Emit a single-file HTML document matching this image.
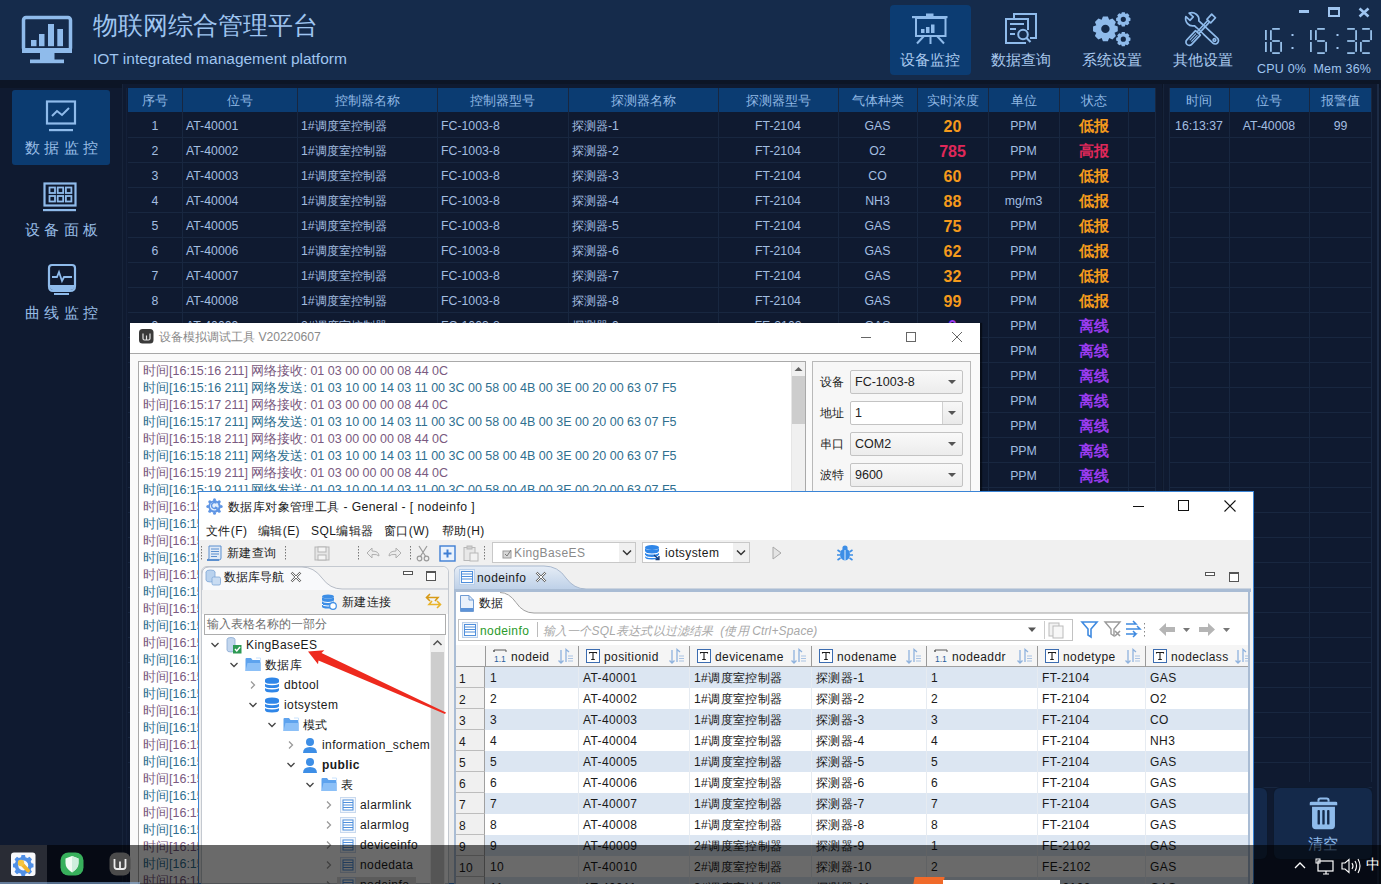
<!DOCTYPE html><html><head><meta charset="utf-8"><style>
*{box-sizing:border-box;margin:0;padding:0}
html,body{width:1381px;height:884px;overflow:hidden;background:#0e182b;font-family:"Liberation Sans",sans-serif}
.abs{position:absolute}
.t{position:absolute;white-space:nowrap}
.d{letter-spacing:0.4px}
</style></head><body>

<div class="abs" style="left:0;top:0;width:1381px;height:80px;background:#152b4b"></div>
<svg class="abs" style="left:0;top:0" width="90" height="80" viewBox="0 0 90 80">
<rect x="23.5" y="17.5" width="47" height="33" rx="2.5" fill="none" stroke="#8fbbeb" stroke-width="3.5"/>
<rect x="22" y="48" width="50" height="5" fill="#8fbbeb"/>
<rect x="40" y="52" width="14.5" height="8" fill="#8fbbeb"/>
<rect x="30" y="59.5" width="34" height="3.7" fill="#8fbbeb"/>
<rect x="31" y="40" width="5.5" height="6.2" fill="#8fbbeb"/>
<rect x="39" y="34" width="5.5" height="12.2" fill="#8fbbeb"/>
<rect x="48" y="24" width="6" height="22.2" fill="#8fbbeb"/>
<rect x="57.3" y="29" width="5.7" height="17.2" fill="#8fbbeb"/>
</svg>
<div class="t" style="left:93px;top:10px;font-size:25px;color:#9fc5f0;line-height:30px">物联网综合管理平台</div>
<div class="t" style="left:93px;top:49.5px;font-size:15.5px;color:#9fc5f0;line-height:18px">IOT integrated management platform</div>
<div class="abs" style="left:890px;top:5px;width:81px;height:70px;background:#0c3c72;border-radius:4px"></div>
<div class="t" style="left:900px;top:50px;font-size:15px;color:#a9c9ee;line-height:20px">设备监控</div>
<div class="t" style="left:991px;top:50px;font-size:15px;color:#a9c9ee;line-height:20px">数据查询</div>
<div class="t" style="left:1082px;top:50px;font-size:15px;color:#a9c9ee;line-height:20px">系统设置</div>
<div class="t" style="left:1173px;top:50px;font-size:15px;color:#a9c9ee;line-height:20px">其他设置</div>
<svg class="abs" style="left:905px;top:8px" width="50" height="40" viewBox="905 8 50 40">
<rect x="926" y="13.5" width="7.5" height="3" fill="#8fbbeb"/>
<rect x="912" y="16" width="35.5" height="2.2" fill="#8fbbeb"/>
<rect x="916" y="18" width="29.5" height="18" fill="none" stroke="#8fbbeb" stroke-width="2"/>
<rect x="921" y="29" width="3.5" height="4" fill="#8fbbeb"/>
<rect x="926" y="27" width="3.5" height="6" fill="#8fbbeb"/>
<rect x="931" y="24.5" width="3.5" height="8.5" fill="#8fbbeb"/>
<line x1="930.5" y1="36" x2="930.5" y2="44" stroke="#8fbbeb" stroke-width="2"/>
<line x1="924" y1="36" x2="917" y2="43.5" stroke="#8fbbeb" stroke-width="2"/>
<line x1="937" y1="36" x2="944" y2="43.5" stroke="#8fbbeb" stroke-width="2"/>
</svg>
<svg class="abs" style="left:1000px;top:8px" width="45" height="40" viewBox="1000 8 45 40">
<path d="M1014 18 V14 H1036 V38 H1030" fill="none" stroke="#8fbbeb" stroke-width="2"/>
<path d="M1026 43 H1006 V19 H1028 V30" fill="none" stroke="#8fbbeb" stroke-width="2"/>
<line x1="1010" y1="24" x2="1024" y2="24" stroke="#8fbbeb" stroke-width="2"/>
<line x1="1010" y1="29" x2="1016" y2="29" stroke="#8fbbeb" stroke-width="2"/>
<line x1="1010" y1="34" x2="1015" y2="34" stroke="#8fbbeb" stroke-width="2"/>
<circle cx="1023" cy="34.5" r="4.8" fill="none" stroke="#8fbbeb" stroke-width="2"/>
<line x1="1026.5" y1="38" x2="1030.5" y2="42" stroke="#8fbbeb" stroke-width="2.2"/>
</svg>
<svg class="abs" style="left:1085px;top:8px" width="50" height="42" viewBox="1085 8 50 42">
<path fill-rule="evenodd" fill="#8fbbeb" d="M1114.48 25.14 L1117.76 26.44 L1117.76 31.36 L1114.48 32.66 L1114.48 32.66 L1115.88 35.90 L1112.40 39.38 L1109.16 37.98 L1109.16 37.98 L1107.86 41.26 L1102.94 41.26 L1101.64 37.98 L1101.64 37.98 L1098.40 39.38 L1094.92 35.90 L1096.32 32.66 L1096.32 32.66 L1093.04 31.36 L1093.04 26.44 L1096.32 25.14 L1096.32 25.14 L1094.92 21.90 L1098.40 18.42 L1101.64 19.82 L1101.64 19.82 L1102.94 16.54 L1107.86 16.54 L1109.16 19.82 L1109.16 19.82 L1112.40 18.42 L1115.88 21.90 L1114.48 25.14 Z M1109.60 28.90 A4.2 4.2 0 1 0 1101.20 28.90 A4.2 4.2 0 1 0 1109.60 28.90 Z"/>
<path fill-rule="evenodd" fill="#8fbbeb" d="M1128.56 17.12 L1130.46 17.88 L1130.46 20.72 L1128.56 21.48 L1128.56 21.48 L1129.37 23.36 L1127.36 25.37 L1125.48 24.56 L1125.48 24.56 L1124.72 26.46 L1121.88 26.46 L1121.12 24.56 L1121.12 24.56 L1119.24 25.37 L1117.23 23.36 L1118.04 21.48 L1118.04 21.48 L1116.14 20.72 L1116.14 17.88 L1118.04 17.12 L1118.04 17.12 L1117.23 15.24 L1119.24 13.23 L1121.12 14.04 L1121.12 14.04 L1121.88 12.14 L1124.72 12.14 L1125.48 14.04 L1125.48 14.04 L1127.36 13.23 L1129.37 15.24 L1128.56 17.12 Z M1125.90 19.30 A2.6 2.6 0 1 0 1120.70 19.30 A2.6 2.6 0 1 0 1125.90 19.30 Z"/>
<path fill-rule="evenodd" fill="#8fbbeb" d="M1128.56 37.02 L1130.46 37.78 L1130.46 40.62 L1128.56 41.38 L1128.56 41.38 L1129.37 43.26 L1127.36 45.27 L1125.48 44.46 L1125.48 44.46 L1124.72 46.36 L1121.88 46.36 L1121.12 44.46 L1121.12 44.46 L1119.24 45.27 L1117.23 43.26 L1118.04 41.38 L1118.04 41.38 L1116.14 40.62 L1116.14 37.78 L1118.04 37.02 L1118.04 37.02 L1117.23 35.14 L1119.24 33.13 L1121.12 33.94 L1121.12 33.94 L1121.88 32.04 L1124.72 32.04 L1125.48 33.94 L1125.48 33.94 L1127.36 33.13 L1129.37 35.14 L1128.56 37.02 Z M1125.90 39.20 A2.6 2.6 0 1 0 1120.70 39.20 A2.6 2.6 0 1 0 1125.90 39.20 Z"/>
</svg>
<svg class="abs" style="left:1180px;top:8px" width="45" height="42" viewBox="1180 8 45 42">
<g transform="translate(1192.5,19.5) rotate(43)" fill="none" stroke="#8fbbeb" stroke-width="1.7" stroke-linejoin="round">
<path d="M-6.8 -2.4 L-1.2 -2.4 L-1.2 2.4 L-6.8 2.4 A7.2 7.2 0 0 0 5.6 3.3 L31 3.3 A3.3 3.3 0 0 0 31 -3.3 L5.6 -3.3 A7.2 7.2 0 0 0 -6.8 -2.4 Z"/>
<circle cx="30" cy="0" r="1.3"/>
</g>
<g transform="translate(1187,44.5) rotate(-47)">
<path d="M0 -4.6 L18 -4.6 L18 4.6 L0 4.6 Z" fill="#152b4b"/>
<g fill="none" stroke="#8fbbeb" stroke-width="1.7" stroke-linejoin="round">
<path d="M3.3 -3.3 L16 -3.3 L16 3.3 L3.3 3.3 A3.3 3.3 0 0 1 3.3 -3.3 Z"/>
<path d="M5 -0.9 L14 -0.9 M5 1.3 L14 1.3" stroke-width="1.1"/>
<path d="M16 -1.2 L32 -1.2 M16 1.2 L32 1.2"/>
<path d="M32 -2.6 L39 -2.6 L39 2.6 L32 2.6 Z"/>
</g>
</g>
</svg>
<div class="abs" style="left:1299px;top:10px;width:10px;height:2.5px;background:#9fc5f0"></div>
<div class="abs" style="left:1328px;top:7px;width:12px;height:10px;border:2px solid #9fc5f0;border-top-width:3px"></div>
<svg class="abs" style="left:1358px;top:7px" width="12" height="11" viewBox="0 0 12 11"><path d="M1.5 1.5 L10.5 9.5 M10.5 1.5 L1.5 9.5" stroke="#9fc5f0" stroke-width="2.6"/></svg>
<svg class="abs" style="left:0;top:0" width="1381" height="80" viewBox="0 0 1381 80"><rect x="1265" y="30" width="1.8" height="10.0" fill="#96bfe8"/><rect x="1265" y="42.0" width="1.8" height="10.0" fill="#96bfe8"/><rect x="1272.20" y="28.00" width="7.60" height="1.80" fill="#96bfe8"/><rect x="1270.00" y="30.20" width="1.80" height="9.90" fill="#96bfe8"/><rect x="1272.20" y="40.10" width="7.60" height="1.80" fill="#96bfe8"/><rect x="1270.00" y="41.90" width="1.80" height="9.90" fill="#96bfe8"/><rect x="1272.20" y="52.20" width="7.60" height="1.80" fill="#96bfe8"/><rect x="1280.20" y="41.90" width="1.80" height="9.90" fill="#96bfe8"/><rect x="1291.5" y="34" width="2" height="2" fill="#9fc5f0"/><rect x="1291.5" y="47" width="2" height="2" fill="#9fc5f0"/><rect x="1310" y="30" width="1.8" height="10.0" fill="#96bfe8"/><rect x="1310" y="42.0" width="1.8" height="10.0" fill="#96bfe8"/><rect x="1317.20" y="28.00" width="7.60" height="1.80" fill="#96bfe8"/><rect x="1315.00" y="30.20" width="1.80" height="9.90" fill="#96bfe8"/><rect x="1317.20" y="40.10" width="7.60" height="1.80" fill="#96bfe8"/><rect x="1325.20" y="41.90" width="1.80" height="9.90" fill="#96bfe8"/><rect x="1317.20" y="52.20" width="7.60" height="1.80" fill="#96bfe8"/><rect x="1336.5" y="34" width="2" height="2" fill="#9fc5f0"/><rect x="1336.5" y="47" width="2" height="2" fill="#9fc5f0"/><rect x="1347.20" y="28.00" width="7.60" height="1.80" fill="#96bfe8"/><rect x="1355.20" y="30.20" width="1.80" height="9.90" fill="#96bfe8"/><rect x="1347.20" y="40.10" width="7.60" height="1.80" fill="#96bfe8"/><rect x="1355.20" y="41.90" width="1.80" height="9.90" fill="#96bfe8"/><rect x="1347.20" y="52.20" width="7.60" height="1.80" fill="#96bfe8"/><rect x="1362.20" y="28.00" width="7.60" height="1.80" fill="#96bfe8"/><rect x="1370.20" y="30.20" width="1.80" height="9.90" fill="#96bfe8"/><rect x="1362.20" y="40.10" width="7.60" height="1.80" fill="#96bfe8"/><rect x="1360.00" y="41.90" width="1.80" height="9.90" fill="#96bfe8"/><rect x="1362.20" y="52.20" width="7.60" height="1.80" fill="#96bfe8"/></svg>
<div class="t" style="left:1257px;top:62px;font-size:12.5px;color:#9fc5f0;line-height:15px;letter-spacing:0.2px">CPU 0%&nbsp;&nbsp;Mem 36%</div>
<div class="abs" style="left:0;top:80px;width:1381px;height:8px;background:#0c1526"></div>
<div class="abs" style="left:0;top:88px;width:122px;height:796px;background:#0f1a30"></div>
<div class="abs" style="left:12px;top:90px;width:98px;height:75px;background:#0b3b70;border-radius:3px"></div>
<svg class="abs" style="left:0;top:80px" width="120" height="240" viewBox="0 80 120 240">
<rect x="47" y="101.5" width="28" height="22" fill="none" stroke="#8fbbeb" stroke-width="2.2"/>
<rect x="49" y="129" width="24" height="2.2" fill="#8fbbeb"/>
<path d="M52 116 L57 111 L62 115 L69 108" fill="none" stroke="#8fbbeb" stroke-width="2"/>
<rect x="44.5" y="183.5" width="31" height="22" fill="none" stroke="#8fbbeb" stroke-width="2.2"/>
<rect x="43" y="209" width="33" height="2.2" fill="#8fbbeb"/>

<rect x="49.5" y="187.5" width="5.5" height="5.5" fill="none" stroke="#8fbbeb" stroke-width="1.8"/>
<rect x="49.5" y="196.0" width="5.5" height="5.5" fill="none" stroke="#8fbbeb" stroke-width="1.8"/>
<rect x="57.7" y="187.5" width="5.5" height="5.5" fill="none" stroke="#8fbbeb" stroke-width="1.8"/>
<rect x="57.7" y="196.0" width="5.5" height="5.5" fill="none" stroke="#8fbbeb" stroke-width="1.8"/>
<rect x="65.9" y="187.5" width="5.5" height="5.5" fill="none" stroke="#8fbbeb" stroke-width="1.8"/>
<rect x="65.9" y="196.0" width="5.5" height="5.5" fill="none" stroke="#8fbbeb" stroke-width="1.8"/>
<path d="M49 268 Q49 265 52 265 H72 Q75 265 75 268 V286 Q75 291 70 291 H53 Q49 291 49 286 Z" fill="none" stroke="#8fbbeb" stroke-width="2.2"/>
<path d="M50 285 H74 V287 Q74 290 70 290 H53 Q50 290 50 287 Z" fill="#8fbbeb"/>
<rect x="54" y="293" width="15" height="2" fill="#8fbbeb"/>
<path d="M52 277 H57 L59 272 L62 281 L64 277 H72" fill="none" stroke="#8fbbeb" stroke-width="1.8"/>
</svg>
<div class="t" style="left:25px;top:137.5px;font-size:15px;letter-spacing:4.3px;color:#98bde6;line-height:20px">数据监控</div>
<div class="t" style="left:25px;top:219.5px;font-size:15px;letter-spacing:4.3px;color:#98bde6;line-height:20px">设备面板</div>
<div class="t" style="left:25px;top:302.5px;font-size:15px;letter-spacing:4.3px;color:#98bde6;line-height:20px">曲线监控</div>
<div class="abs" style="left:122px;top:84px;width:1040px;height:800px;background:#0f1a30;border-left:1px solid #17243b"></div><div class="abs" style="left:126px;top:88px;width:1px;height:796px;background:#142039"></div>
<div class="abs" style="left:1163px;top:84px;width:216px;height:800px;background:#0f1a30;border-left:1px solid #16233a;border-right:2px solid #1c2b45"></div>
<div class="abs" style="left:128px;top:88px;width:1027px;height:24px;background:#0b3c72"></div>
<div class="t" style="left:128px;top:89px;width:54px;height:24px;line-height:24px;text-align:center;font-size:12.5px;color:#90b8e4">序号</div>
<div class="t" style="left:182px;top:89px;width:115px;height:24px;line-height:24px;text-align:center;font-size:12.5px;color:#90b8e4">位号</div>
<div class="t" style="left:297px;top:89px;width:140px;height:24px;line-height:24px;text-align:center;font-size:12.5px;color:#90b8e4">控制器名称</div>
<div class="t" style="left:437px;top:89px;width:131px;height:24px;line-height:24px;text-align:center;font-size:12.5px;color:#90b8e4">控制器型号</div>
<div class="t" style="left:568px;top:89px;width:150px;height:24px;line-height:24px;text-align:center;font-size:12.5px;color:#90b8e4">探测器名称</div>
<div class="t" style="left:718px;top:89px;width:120px;height:24px;line-height:24px;text-align:center;font-size:12.5px;color:#90b8e4">探测器型号</div>
<div class="t" style="left:838px;top:89px;width:79px;height:24px;line-height:24px;text-align:center;font-size:12.5px;color:#90b8e4">气体种类</div>
<div class="t" style="left:917px;top:89px;width:71px;height:24px;line-height:24px;text-align:center;font-size:12.5px;color:#90b8e4">实时浓度</div>
<div class="t" style="left:988px;top:89px;width:71px;height:24px;line-height:24px;text-align:center;font-size:12.5px;color:#90b8e4">单位</div>
<div class="t" style="left:1059px;top:89px;width:69px;height:24px;line-height:24px;text-align:center;font-size:12.5px;color:#90b8e4">状态</div>
<div class="t" style="left:1128px;top:89px;width:27px;height:24px;line-height:24px;text-align:center;font-size:12.5px;color:#90b8e4"></div>
<svg class="abs" style="left:0;top:0" width="1381" height="884"><rect x="182" y="88" width="1" height="694" fill="#182740"/><rect x="297" y="88" width="1" height="694" fill="#182740"/><rect x="437" y="88" width="1" height="694" fill="#182740"/><rect x="568" y="88" width="1" height="694" fill="#182740"/><rect x="718" y="88" width="1" height="694" fill="#182740"/><rect x="838" y="88" width="1" height="694" fill="#182740"/><rect x="917" y="88" width="1" height="694" fill="#182740"/><rect x="988" y="88" width="1" height="694" fill="#182740"/><rect x="1059" y="88" width="1" height="694" fill="#182740"/><rect x="1128" y="88" width="1" height="694" fill="#182740"/><rect x="1155" y="88" width="1" height="694" fill="#182740"/><rect x="128" y="137" width="1027" height="1" fill="#182740"/><rect x="128" y="162" width="1027" height="1" fill="#182740"/><rect x="128" y="187" width="1027" height="1" fill="#182740"/><rect x="128" y="212" width="1027" height="1" fill="#182740"/><rect x="128" y="237" width="1027" height="1" fill="#182740"/><rect x="128" y="262" width="1027" height="1" fill="#182740"/><rect x="128" y="287" width="1027" height="1" fill="#182740"/><rect x="128" y="312" width="1027" height="1" fill="#182740"/><rect x="128" y="337" width="1027" height="1" fill="#182740"/><rect x="128" y="362" width="1027" height="1" fill="#182740"/><rect x="128" y="387" width="1027" height="1" fill="#182740"/><rect x="128" y="412" width="1027" height="1" fill="#182740"/><rect x="128" y="437" width="1027" height="1" fill="#182740"/><rect x="128" y="462" width="1027" height="1" fill="#182740"/><rect x="128" y="487" width="1027" height="1" fill="#182740"/><rect x="128" y="512" width="1027" height="1" fill="#182740"/><rect x="128" y="537" width="1027" height="1" fill="#182740"/><rect x="128" y="562" width="1027" height="1" fill="#182740"/><rect x="128" y="587" width="1027" height="1" fill="#182740"/><rect x="128" y="612" width="1027" height="1" fill="#182740"/><rect x="128" y="637" width="1027" height="1" fill="#182740"/><rect x="128" y="662" width="1027" height="1" fill="#182740"/><rect x="128" y="687" width="1027" height="1" fill="#182740"/><rect x="128" y="712" width="1027" height="1" fill="#182740"/><rect x="128" y="737" width="1027" height="1" fill="#182740"/><rect x="128" y="762" width="1027" height="1" fill="#182740"/><rect x="128" y="787" width="1027" height="1" fill="#182740"/></svg>
<div class="t" style="left:128px;top:114px;width:54px;height:25px;line-height:25px;font-size:12.3px;color:#a3bee0;text-align:center;">1</div>
<div class="t" style="left:182px;top:114px;width:115px;height:25px;line-height:25px;font-size:12.3px;color:#a3bee0;padding-left:4px;">AT-40001</div>
<div class="t" style="left:297px;top:114px;width:140px;height:25px;line-height:25px;font-size:12.3px;color:#a3bee0;padding-left:4px;">1#调度室控制器</div>
<div class="t" style="left:437px;top:114px;width:131px;height:25px;line-height:25px;font-size:12.3px;color:#a3bee0;padding-left:4px;">FC-1003-8</div>
<div class="t" style="left:568px;top:114px;width:150px;height:25px;line-height:25px;font-size:12.3px;color:#a3bee0;padding-left:4px;">探测器-1</div>
<div class="t" style="left:718px;top:114px;width:120px;height:25px;line-height:25px;font-size:12.3px;color:#a3bee0;text-align:center;">FT-2104</div>
<div class="t" style="left:838px;top:114px;width:79px;height:25px;line-height:25px;font-size:12.3px;color:#a3bee0;text-align:center;">GAS</div>
<div class="t" style="left:917px;top:114px;width:71px;height:25px;line-height:25px;font-size:12.3px;color:#a3bee0;text-align:center;color:#f59a1c;font-weight:bold;font-size:16px;">20</div>
<div class="t" style="left:988px;top:114px;width:71px;height:25px;line-height:25px;font-size:12.3px;color:#a3bee0;text-align:center;">PPM</div>
<div class="t" style="left:1059px;top:114px;width:69px;height:25px;line-height:25px;font-size:12.3px;color:#a3bee0;text-align:center;color:#f59a1c;font-weight:bold;font-size:14.5px;">低报</div>
<div class="t" style="left:128px;top:139px;width:54px;height:25px;line-height:25px;font-size:12.3px;color:#a3bee0;text-align:center;">2</div>
<div class="t" style="left:182px;top:139px;width:115px;height:25px;line-height:25px;font-size:12.3px;color:#a3bee0;padding-left:4px;">AT-40002</div>
<div class="t" style="left:297px;top:139px;width:140px;height:25px;line-height:25px;font-size:12.3px;color:#a3bee0;padding-left:4px;">1#调度室控制器</div>
<div class="t" style="left:437px;top:139px;width:131px;height:25px;line-height:25px;font-size:12.3px;color:#a3bee0;padding-left:4px;">FC-1003-8</div>
<div class="t" style="left:568px;top:139px;width:150px;height:25px;line-height:25px;font-size:12.3px;color:#a3bee0;padding-left:4px;">探测器-2</div>
<div class="t" style="left:718px;top:139px;width:120px;height:25px;line-height:25px;font-size:12.3px;color:#a3bee0;text-align:center;">FT-2104</div>
<div class="t" style="left:838px;top:139px;width:79px;height:25px;line-height:25px;font-size:12.3px;color:#a3bee0;text-align:center;">O2</div>
<div class="t" style="left:917px;top:139px;width:71px;height:25px;line-height:25px;font-size:12.3px;color:#a3bee0;text-align:center;color:#e0285a;font-weight:bold;font-size:16px;">785</div>
<div class="t" style="left:988px;top:139px;width:71px;height:25px;line-height:25px;font-size:12.3px;color:#a3bee0;text-align:center;">PPM</div>
<div class="t" style="left:1059px;top:139px;width:69px;height:25px;line-height:25px;font-size:12.3px;color:#a3bee0;text-align:center;color:#e0285a;font-weight:bold;font-size:14.5px;">高报</div>
<div class="t" style="left:128px;top:164px;width:54px;height:25px;line-height:25px;font-size:12.3px;color:#a3bee0;text-align:center;">3</div>
<div class="t" style="left:182px;top:164px;width:115px;height:25px;line-height:25px;font-size:12.3px;color:#a3bee0;padding-left:4px;">AT-40003</div>
<div class="t" style="left:297px;top:164px;width:140px;height:25px;line-height:25px;font-size:12.3px;color:#a3bee0;padding-left:4px;">1#调度室控制器</div>
<div class="t" style="left:437px;top:164px;width:131px;height:25px;line-height:25px;font-size:12.3px;color:#a3bee0;padding-left:4px;">FC-1003-8</div>
<div class="t" style="left:568px;top:164px;width:150px;height:25px;line-height:25px;font-size:12.3px;color:#a3bee0;padding-left:4px;">探测器-3</div>
<div class="t" style="left:718px;top:164px;width:120px;height:25px;line-height:25px;font-size:12.3px;color:#a3bee0;text-align:center;">FT-2104</div>
<div class="t" style="left:838px;top:164px;width:79px;height:25px;line-height:25px;font-size:12.3px;color:#a3bee0;text-align:center;">CO</div>
<div class="t" style="left:917px;top:164px;width:71px;height:25px;line-height:25px;font-size:12.3px;color:#a3bee0;text-align:center;color:#f59a1c;font-weight:bold;font-size:16px;">60</div>
<div class="t" style="left:988px;top:164px;width:71px;height:25px;line-height:25px;font-size:12.3px;color:#a3bee0;text-align:center;">PPM</div>
<div class="t" style="left:1059px;top:164px;width:69px;height:25px;line-height:25px;font-size:12.3px;color:#a3bee0;text-align:center;color:#f59a1c;font-weight:bold;font-size:14.5px;">低报</div>
<div class="t" style="left:128px;top:189px;width:54px;height:25px;line-height:25px;font-size:12.3px;color:#a3bee0;text-align:center;">4</div>
<div class="t" style="left:182px;top:189px;width:115px;height:25px;line-height:25px;font-size:12.3px;color:#a3bee0;padding-left:4px;">AT-40004</div>
<div class="t" style="left:297px;top:189px;width:140px;height:25px;line-height:25px;font-size:12.3px;color:#a3bee0;padding-left:4px;">1#调度室控制器</div>
<div class="t" style="left:437px;top:189px;width:131px;height:25px;line-height:25px;font-size:12.3px;color:#a3bee0;padding-left:4px;">FC-1003-8</div>
<div class="t" style="left:568px;top:189px;width:150px;height:25px;line-height:25px;font-size:12.3px;color:#a3bee0;padding-left:4px;">探测器-4</div>
<div class="t" style="left:718px;top:189px;width:120px;height:25px;line-height:25px;font-size:12.3px;color:#a3bee0;text-align:center;">FT-2104</div>
<div class="t" style="left:838px;top:189px;width:79px;height:25px;line-height:25px;font-size:12.3px;color:#a3bee0;text-align:center;">NH3</div>
<div class="t" style="left:917px;top:189px;width:71px;height:25px;line-height:25px;font-size:12.3px;color:#a3bee0;text-align:center;color:#f59a1c;font-weight:bold;font-size:16px;">88</div>
<div class="t" style="left:988px;top:189px;width:71px;height:25px;line-height:25px;font-size:12.3px;color:#a3bee0;text-align:center;">mg/m3</div>
<div class="t" style="left:1059px;top:189px;width:69px;height:25px;line-height:25px;font-size:12.3px;color:#a3bee0;text-align:center;color:#f59a1c;font-weight:bold;font-size:14.5px;">低报</div>
<div class="t" style="left:128px;top:214px;width:54px;height:25px;line-height:25px;font-size:12.3px;color:#a3bee0;text-align:center;">5</div>
<div class="t" style="left:182px;top:214px;width:115px;height:25px;line-height:25px;font-size:12.3px;color:#a3bee0;padding-left:4px;">AT-40005</div>
<div class="t" style="left:297px;top:214px;width:140px;height:25px;line-height:25px;font-size:12.3px;color:#a3bee0;padding-left:4px;">1#调度室控制器</div>
<div class="t" style="left:437px;top:214px;width:131px;height:25px;line-height:25px;font-size:12.3px;color:#a3bee0;padding-left:4px;">FC-1003-8</div>
<div class="t" style="left:568px;top:214px;width:150px;height:25px;line-height:25px;font-size:12.3px;color:#a3bee0;padding-left:4px;">探测器-5</div>
<div class="t" style="left:718px;top:214px;width:120px;height:25px;line-height:25px;font-size:12.3px;color:#a3bee0;text-align:center;">FT-2104</div>
<div class="t" style="left:838px;top:214px;width:79px;height:25px;line-height:25px;font-size:12.3px;color:#a3bee0;text-align:center;">GAS</div>
<div class="t" style="left:917px;top:214px;width:71px;height:25px;line-height:25px;font-size:12.3px;color:#a3bee0;text-align:center;color:#f59a1c;font-weight:bold;font-size:16px;">75</div>
<div class="t" style="left:988px;top:214px;width:71px;height:25px;line-height:25px;font-size:12.3px;color:#a3bee0;text-align:center;">PPM</div>
<div class="t" style="left:1059px;top:214px;width:69px;height:25px;line-height:25px;font-size:12.3px;color:#a3bee0;text-align:center;color:#f59a1c;font-weight:bold;font-size:14.5px;">低报</div>
<div class="t" style="left:128px;top:239px;width:54px;height:25px;line-height:25px;font-size:12.3px;color:#a3bee0;text-align:center;">6</div>
<div class="t" style="left:182px;top:239px;width:115px;height:25px;line-height:25px;font-size:12.3px;color:#a3bee0;padding-left:4px;">AT-40006</div>
<div class="t" style="left:297px;top:239px;width:140px;height:25px;line-height:25px;font-size:12.3px;color:#a3bee0;padding-left:4px;">1#调度室控制器</div>
<div class="t" style="left:437px;top:239px;width:131px;height:25px;line-height:25px;font-size:12.3px;color:#a3bee0;padding-left:4px;">FC-1003-8</div>
<div class="t" style="left:568px;top:239px;width:150px;height:25px;line-height:25px;font-size:12.3px;color:#a3bee0;padding-left:4px;">探测器-6</div>
<div class="t" style="left:718px;top:239px;width:120px;height:25px;line-height:25px;font-size:12.3px;color:#a3bee0;text-align:center;">FT-2104</div>
<div class="t" style="left:838px;top:239px;width:79px;height:25px;line-height:25px;font-size:12.3px;color:#a3bee0;text-align:center;">GAS</div>
<div class="t" style="left:917px;top:239px;width:71px;height:25px;line-height:25px;font-size:12.3px;color:#a3bee0;text-align:center;color:#f59a1c;font-weight:bold;font-size:16px;">62</div>
<div class="t" style="left:988px;top:239px;width:71px;height:25px;line-height:25px;font-size:12.3px;color:#a3bee0;text-align:center;">PPM</div>
<div class="t" style="left:1059px;top:239px;width:69px;height:25px;line-height:25px;font-size:12.3px;color:#a3bee0;text-align:center;color:#f59a1c;font-weight:bold;font-size:14.5px;">低报</div>
<div class="t" style="left:128px;top:264px;width:54px;height:25px;line-height:25px;font-size:12.3px;color:#a3bee0;text-align:center;">7</div>
<div class="t" style="left:182px;top:264px;width:115px;height:25px;line-height:25px;font-size:12.3px;color:#a3bee0;padding-left:4px;">AT-40007</div>
<div class="t" style="left:297px;top:264px;width:140px;height:25px;line-height:25px;font-size:12.3px;color:#a3bee0;padding-left:4px;">1#调度室控制器</div>
<div class="t" style="left:437px;top:264px;width:131px;height:25px;line-height:25px;font-size:12.3px;color:#a3bee0;padding-left:4px;">FC-1003-8</div>
<div class="t" style="left:568px;top:264px;width:150px;height:25px;line-height:25px;font-size:12.3px;color:#a3bee0;padding-left:4px;">探测器-7</div>
<div class="t" style="left:718px;top:264px;width:120px;height:25px;line-height:25px;font-size:12.3px;color:#a3bee0;text-align:center;">FT-2104</div>
<div class="t" style="left:838px;top:264px;width:79px;height:25px;line-height:25px;font-size:12.3px;color:#a3bee0;text-align:center;">GAS</div>
<div class="t" style="left:917px;top:264px;width:71px;height:25px;line-height:25px;font-size:12.3px;color:#a3bee0;text-align:center;color:#f59a1c;font-weight:bold;font-size:16px;">32</div>
<div class="t" style="left:988px;top:264px;width:71px;height:25px;line-height:25px;font-size:12.3px;color:#a3bee0;text-align:center;">PPM</div>
<div class="t" style="left:1059px;top:264px;width:69px;height:25px;line-height:25px;font-size:12.3px;color:#a3bee0;text-align:center;color:#f59a1c;font-weight:bold;font-size:14.5px;">低报</div>
<div class="t" style="left:128px;top:289px;width:54px;height:25px;line-height:25px;font-size:12.3px;color:#a3bee0;text-align:center;">8</div>
<div class="t" style="left:182px;top:289px;width:115px;height:25px;line-height:25px;font-size:12.3px;color:#a3bee0;padding-left:4px;">AT-40008</div>
<div class="t" style="left:297px;top:289px;width:140px;height:25px;line-height:25px;font-size:12.3px;color:#a3bee0;padding-left:4px;">1#调度室控制器</div>
<div class="t" style="left:437px;top:289px;width:131px;height:25px;line-height:25px;font-size:12.3px;color:#a3bee0;padding-left:4px;">FC-1003-8</div>
<div class="t" style="left:568px;top:289px;width:150px;height:25px;line-height:25px;font-size:12.3px;color:#a3bee0;padding-left:4px;">探测器-8</div>
<div class="t" style="left:718px;top:289px;width:120px;height:25px;line-height:25px;font-size:12.3px;color:#a3bee0;text-align:center;">FT-2104</div>
<div class="t" style="left:838px;top:289px;width:79px;height:25px;line-height:25px;font-size:12.3px;color:#a3bee0;text-align:center;">GAS</div>
<div class="t" style="left:917px;top:289px;width:71px;height:25px;line-height:25px;font-size:12.3px;color:#a3bee0;text-align:center;color:#f59a1c;font-weight:bold;font-size:16px;">99</div>
<div class="t" style="left:988px;top:289px;width:71px;height:25px;line-height:25px;font-size:12.3px;color:#a3bee0;text-align:center;">PPM</div>
<div class="t" style="left:1059px;top:289px;width:69px;height:25px;line-height:25px;font-size:12.3px;color:#a3bee0;text-align:center;color:#f59a1c;font-weight:bold;font-size:14.5px;">低报</div>
<div class="t" style="left:128px;top:314px;width:54px;height:25px;line-height:25px;font-size:12.3px;color:#a3bee0;text-align:center;">9</div>
<div class="t" style="left:182px;top:314px;width:115px;height:25px;line-height:25px;font-size:12.3px;color:#a3bee0;padding-left:4px;">AT-40009</div>
<div class="t" style="left:297px;top:314px;width:140px;height:25px;line-height:25px;font-size:12.3px;color:#a3bee0;padding-left:4px;">2#调度室控制器</div>
<div class="t" style="left:437px;top:314px;width:131px;height:25px;line-height:25px;font-size:12.3px;color:#a3bee0;padding-left:4px;">FC-1003-8</div>
<div class="t" style="left:568px;top:314px;width:150px;height:25px;line-height:25px;font-size:12.3px;color:#a3bee0;padding-left:4px;">探测器-9</div>
<div class="t" style="left:718px;top:314px;width:120px;height:25px;line-height:25px;font-size:12.3px;color:#a3bee0;text-align:center;">FE-2102</div>
<div class="t" style="left:838px;top:314px;width:79px;height:25px;line-height:25px;font-size:12.3px;color:#a3bee0;text-align:center;">GAS</div>
<div class="t" style="left:917px;top:314px;width:71px;height:25px;line-height:25px;font-size:12.3px;color:#a3bee0;text-align:center;color:#9a3bef;font-weight:bold;font-size:16px;">0</div>
<div class="t" style="left:988px;top:314px;width:71px;height:25px;line-height:25px;font-size:12.3px;color:#a3bee0;text-align:center;">PPM</div>
<div class="t" style="left:1059px;top:314px;width:69px;height:25px;line-height:25px;font-size:12.3px;color:#a3bee0;text-align:center;color:#9a3bef;font-weight:bold;font-size:14.5px;">离线</div>
<div class="t" style="left:128px;top:339px;width:54px;height:25px;line-height:25px;font-size:12.3px;color:#a3bee0;text-align:center;">10</div>
<div class="t" style="left:182px;top:339px;width:115px;height:25px;line-height:25px;font-size:12.3px;color:#a3bee0;padding-left:4px;">AT-40010</div>
<div class="t" style="left:297px;top:339px;width:140px;height:25px;line-height:25px;font-size:12.3px;color:#a3bee0;padding-left:4px;">2#调度室控制器</div>
<div class="t" style="left:437px;top:339px;width:131px;height:25px;line-height:25px;font-size:12.3px;color:#a3bee0;padding-left:4px;">FC-1003-8</div>
<div class="t" style="left:568px;top:339px;width:150px;height:25px;line-height:25px;font-size:12.3px;color:#a3bee0;padding-left:4px;">探测器-10</div>
<div class="t" style="left:718px;top:339px;width:120px;height:25px;line-height:25px;font-size:12.3px;color:#a3bee0;text-align:center;">FE-2102</div>
<div class="t" style="left:838px;top:339px;width:79px;height:25px;line-height:25px;font-size:12.3px;color:#a3bee0;text-align:center;">GAS</div>
<div class="t" style="left:917px;top:339px;width:71px;height:25px;line-height:25px;font-size:12.3px;color:#a3bee0;text-align:center;color:#9a3bef;font-weight:bold;font-size:16px;">0</div>
<div class="t" style="left:988px;top:339px;width:71px;height:25px;line-height:25px;font-size:12.3px;color:#a3bee0;text-align:center;">PPM</div>
<div class="t" style="left:1059px;top:339px;width:69px;height:25px;line-height:25px;font-size:12.3px;color:#a3bee0;text-align:center;color:#9a3bef;font-weight:bold;font-size:14.5px;">离线</div>
<div class="t" style="left:128px;top:364px;width:54px;height:25px;line-height:25px;font-size:12.3px;color:#a3bee0;text-align:center;">11</div>
<div class="t" style="left:182px;top:364px;width:115px;height:25px;line-height:25px;font-size:12.3px;color:#a3bee0;padding-left:4px;">AT-40011</div>
<div class="t" style="left:297px;top:364px;width:140px;height:25px;line-height:25px;font-size:12.3px;color:#a3bee0;padding-left:4px;">2#调度室控制器</div>
<div class="t" style="left:437px;top:364px;width:131px;height:25px;line-height:25px;font-size:12.3px;color:#a3bee0;padding-left:4px;">FC-1003-8</div>
<div class="t" style="left:568px;top:364px;width:150px;height:25px;line-height:25px;font-size:12.3px;color:#a3bee0;padding-left:4px;">探测器-11</div>
<div class="t" style="left:718px;top:364px;width:120px;height:25px;line-height:25px;font-size:12.3px;color:#a3bee0;text-align:center;">FE-2102</div>
<div class="t" style="left:838px;top:364px;width:79px;height:25px;line-height:25px;font-size:12.3px;color:#a3bee0;text-align:center;">GAS</div>
<div class="t" style="left:917px;top:364px;width:71px;height:25px;line-height:25px;font-size:12.3px;color:#a3bee0;text-align:center;color:#9a3bef;font-weight:bold;font-size:16px;">0</div>
<div class="t" style="left:988px;top:364px;width:71px;height:25px;line-height:25px;font-size:12.3px;color:#a3bee0;text-align:center;">PPM</div>
<div class="t" style="left:1059px;top:364px;width:69px;height:25px;line-height:25px;font-size:12.3px;color:#a3bee0;text-align:center;color:#9a3bef;font-weight:bold;font-size:14.5px;">离线</div>
<div class="t" style="left:128px;top:389px;width:54px;height:25px;line-height:25px;font-size:12.3px;color:#a3bee0;text-align:center;">12</div>
<div class="t" style="left:182px;top:389px;width:115px;height:25px;line-height:25px;font-size:12.3px;color:#a3bee0;padding-left:4px;">AT-40012</div>
<div class="t" style="left:297px;top:389px;width:140px;height:25px;line-height:25px;font-size:12.3px;color:#a3bee0;padding-left:4px;">2#调度室控制器</div>
<div class="t" style="left:437px;top:389px;width:131px;height:25px;line-height:25px;font-size:12.3px;color:#a3bee0;padding-left:4px;">FC-1003-8</div>
<div class="t" style="left:568px;top:389px;width:150px;height:25px;line-height:25px;font-size:12.3px;color:#a3bee0;padding-left:4px;">探测器-12</div>
<div class="t" style="left:718px;top:389px;width:120px;height:25px;line-height:25px;font-size:12.3px;color:#a3bee0;text-align:center;">FE-2102</div>
<div class="t" style="left:838px;top:389px;width:79px;height:25px;line-height:25px;font-size:12.3px;color:#a3bee0;text-align:center;">GAS</div>
<div class="t" style="left:917px;top:389px;width:71px;height:25px;line-height:25px;font-size:12.3px;color:#a3bee0;text-align:center;color:#9a3bef;font-weight:bold;font-size:16px;">0</div>
<div class="t" style="left:988px;top:389px;width:71px;height:25px;line-height:25px;font-size:12.3px;color:#a3bee0;text-align:center;">PPM</div>
<div class="t" style="left:1059px;top:389px;width:69px;height:25px;line-height:25px;font-size:12.3px;color:#a3bee0;text-align:center;color:#9a3bef;font-weight:bold;font-size:14.5px;">离线</div>
<div class="t" style="left:128px;top:414px;width:54px;height:25px;line-height:25px;font-size:12.3px;color:#a3bee0;text-align:center;">13</div>
<div class="t" style="left:182px;top:414px;width:115px;height:25px;line-height:25px;font-size:12.3px;color:#a3bee0;padding-left:4px;">AT-40013</div>
<div class="t" style="left:297px;top:414px;width:140px;height:25px;line-height:25px;font-size:12.3px;color:#a3bee0;padding-left:4px;">2#调度室控制器</div>
<div class="t" style="left:437px;top:414px;width:131px;height:25px;line-height:25px;font-size:12.3px;color:#a3bee0;padding-left:4px;">FC-1003-8</div>
<div class="t" style="left:568px;top:414px;width:150px;height:25px;line-height:25px;font-size:12.3px;color:#a3bee0;padding-left:4px;">探测器-13</div>
<div class="t" style="left:718px;top:414px;width:120px;height:25px;line-height:25px;font-size:12.3px;color:#a3bee0;text-align:center;">FE-2102</div>
<div class="t" style="left:838px;top:414px;width:79px;height:25px;line-height:25px;font-size:12.3px;color:#a3bee0;text-align:center;">GAS</div>
<div class="t" style="left:917px;top:414px;width:71px;height:25px;line-height:25px;font-size:12.3px;color:#a3bee0;text-align:center;color:#9a3bef;font-weight:bold;font-size:16px;">0</div>
<div class="t" style="left:988px;top:414px;width:71px;height:25px;line-height:25px;font-size:12.3px;color:#a3bee0;text-align:center;">PPM</div>
<div class="t" style="left:1059px;top:414px;width:69px;height:25px;line-height:25px;font-size:12.3px;color:#a3bee0;text-align:center;color:#9a3bef;font-weight:bold;font-size:14.5px;">离线</div>
<div class="t" style="left:128px;top:439px;width:54px;height:25px;line-height:25px;font-size:12.3px;color:#a3bee0;text-align:center;">14</div>
<div class="t" style="left:182px;top:439px;width:115px;height:25px;line-height:25px;font-size:12.3px;color:#a3bee0;padding-left:4px;">AT-40014</div>
<div class="t" style="left:297px;top:439px;width:140px;height:25px;line-height:25px;font-size:12.3px;color:#a3bee0;padding-left:4px;">2#调度室控制器</div>
<div class="t" style="left:437px;top:439px;width:131px;height:25px;line-height:25px;font-size:12.3px;color:#a3bee0;padding-left:4px;">FC-1003-8</div>
<div class="t" style="left:568px;top:439px;width:150px;height:25px;line-height:25px;font-size:12.3px;color:#a3bee0;padding-left:4px;">探测器-14</div>
<div class="t" style="left:718px;top:439px;width:120px;height:25px;line-height:25px;font-size:12.3px;color:#a3bee0;text-align:center;">FE-2102</div>
<div class="t" style="left:838px;top:439px;width:79px;height:25px;line-height:25px;font-size:12.3px;color:#a3bee0;text-align:center;">GAS</div>
<div class="t" style="left:917px;top:439px;width:71px;height:25px;line-height:25px;font-size:12.3px;color:#a3bee0;text-align:center;color:#9a3bef;font-weight:bold;font-size:16px;">0</div>
<div class="t" style="left:988px;top:439px;width:71px;height:25px;line-height:25px;font-size:12.3px;color:#a3bee0;text-align:center;">PPM</div>
<div class="t" style="left:1059px;top:439px;width:69px;height:25px;line-height:25px;font-size:12.3px;color:#a3bee0;text-align:center;color:#9a3bef;font-weight:bold;font-size:14.5px;">离线</div>
<div class="t" style="left:128px;top:464px;width:54px;height:25px;line-height:25px;font-size:12.3px;color:#a3bee0;text-align:center;">15</div>
<div class="t" style="left:182px;top:464px;width:115px;height:25px;line-height:25px;font-size:12.3px;color:#a3bee0;padding-left:4px;">AT-40015</div>
<div class="t" style="left:297px;top:464px;width:140px;height:25px;line-height:25px;font-size:12.3px;color:#a3bee0;padding-left:4px;">2#调度室控制器</div>
<div class="t" style="left:437px;top:464px;width:131px;height:25px;line-height:25px;font-size:12.3px;color:#a3bee0;padding-left:4px;">FC-1003-8</div>
<div class="t" style="left:568px;top:464px;width:150px;height:25px;line-height:25px;font-size:12.3px;color:#a3bee0;padding-left:4px;">探测器-15</div>
<div class="t" style="left:718px;top:464px;width:120px;height:25px;line-height:25px;font-size:12.3px;color:#a3bee0;text-align:center;">FE-2102</div>
<div class="t" style="left:838px;top:464px;width:79px;height:25px;line-height:25px;font-size:12.3px;color:#a3bee0;text-align:center;">GAS</div>
<div class="t" style="left:917px;top:464px;width:71px;height:25px;line-height:25px;font-size:12.3px;color:#a3bee0;text-align:center;color:#9a3bef;font-weight:bold;font-size:16px;">0</div>
<div class="t" style="left:988px;top:464px;width:71px;height:25px;line-height:25px;font-size:12.3px;color:#a3bee0;text-align:center;">PPM</div>
<div class="t" style="left:1059px;top:464px;width:69px;height:25px;line-height:25px;font-size:12.3px;color:#a3bee0;text-align:center;color:#9a3bef;font-weight:bold;font-size:14.5px;">离线</div>
<div class="abs" style="left:1169px;top:88px;width:203px;height:24px;background:#0b3c72"></div>
<div class="t" style="left:1169px;top:89px;width:60px;height:24px;line-height:24px;text-align:center;font-size:12.5px;color:#90b8e4">时间</div>
<div class="t" style="left:1229px;top:89px;width:80px;height:24px;line-height:24px;text-align:center;font-size:12.5px;color:#90b8e4">位号</div>
<div class="t" style="left:1309px;top:89px;width:63px;height:24px;line-height:24px;text-align:center;font-size:12.5px;color:#90b8e4">报警值</div>
<svg class="abs" style="left:0;top:0" width="1381" height="884"><rect x="1229" y="88" width="1" height="694" fill="#182740"/><rect x="1309" y="88" width="1" height="694" fill="#182740"/><rect x="1169" y="88" width="1" height="694" fill="#182740"/><rect x="1371" y="88" width="1" height="694" fill="#182740"/><rect x="1169" y="137" width="203" height="1" fill="#182740"/><rect x="1169" y="162" width="203" height="1" fill="#182740"/><rect x="1169" y="187" width="203" height="1" fill="#182740"/><rect x="1169" y="212" width="203" height="1" fill="#182740"/><rect x="1169" y="237" width="203" height="1" fill="#182740"/><rect x="1169" y="262" width="203" height="1" fill="#182740"/><rect x="1169" y="287" width="203" height="1" fill="#182740"/><rect x="1169" y="312" width="203" height="1" fill="#182740"/><rect x="1169" y="337" width="203" height="1" fill="#182740"/><rect x="1169" y="362" width="203" height="1" fill="#182740"/><rect x="1169" y="387" width="203" height="1" fill="#182740"/><rect x="1169" y="412" width="203" height="1" fill="#182740"/><rect x="1169" y="437" width="203" height="1" fill="#182740"/><rect x="1169" y="462" width="203" height="1" fill="#182740"/><rect x="1169" y="487" width="203" height="1" fill="#182740"/><rect x="1169" y="512" width="203" height="1" fill="#182740"/><rect x="1169" y="537" width="203" height="1" fill="#182740"/><rect x="1169" y="562" width="203" height="1" fill="#182740"/><rect x="1169" y="587" width="203" height="1" fill="#182740"/><rect x="1169" y="612" width="203" height="1" fill="#182740"/><rect x="1169" y="637" width="203" height="1" fill="#182740"/><rect x="1169" y="662" width="203" height="1" fill="#182740"/><rect x="1169" y="687" width="203" height="1" fill="#182740"/><rect x="1169" y="712" width="203" height="1" fill="#182740"/><rect x="1169" y="737" width="203" height="1" fill="#182740"/><rect x="1169" y="762" width="203" height="1" fill="#182740"/><rect x="1169" y="787" width="203" height="1" fill="#182740"/></svg>
<div class="t" style="left:1169px;top:114px;width:60px;height:25px;line-height:25px;text-align:center;font-size:12.3px;color:#a3bee0">16:13:37</div>
<div class="t" style="left:1229px;top:114px;width:80px;height:25px;line-height:25px;text-align:center;font-size:12.3px;color:#a3bee0">AT-40008</div>
<div class="t" style="left:1309px;top:114px;width:63px;height:25px;line-height:25px;text-align:center;font-size:12.3px;color:#a3bee0">99</div>
<div class="abs" style="left:1180px;top:788px;width:87px;height:71px;background:#14294a;border-radius:6px;box-shadow:0 0 0 1px #0d1a2e"></div>
<div class="abs" style="left:1274px;top:788px;width:98px;height:71px;background:#14294a;border-radius:6px;box-shadow:0 0 0 1px #0d1a2e"></div>
<svg class="abs" style="left:1306.5px;top:796.5px" width="33" height="35" viewBox="0 0 36 38">
<path d="M3 6.5 Q3 5 4.5 5 H31.5 Q33 5 33 6.5 V9 H3 Z" fill="#8fbbeb"/>
<path d="M12.5 5 V3.5 Q12.5 1.5 14.5 1.5 H21.5 Q23.5 1.5 23.5 3.5 V5" fill="none" stroke="#8fbbeb" stroke-width="2.2"/>
<path d="M5.5 10.5 H30.5 V31 Q30.5 35 26.5 35 H9.5 Q5.5 35 5.5 31 Z" fill="#8fbbeb"/>
<rect x="11.5" y="14" width="2.6" height="16" rx="1" fill="#14294a"/>
<rect x="16.7" y="14" width="2.6" height="16" rx="1" fill="#14294a"/>
<rect x="21.9" y="14" width="2.6" height="16" rx="1" fill="#14294a"/>
</svg>
<div class="t" style="left:1308px;top:834px;font-size:15px;color:#8fbbeb;line-height:20px">清空</div><div class="abs" style="left:130px;top:323px;width:850px;height:561px;background:#fafafa;box-shadow:2px 0 1px rgba(0,0,0,0.5)"></div>
<div class="abs" style="left:130px;top:323px;width:850px;height:31px;background:#ffffff;border-bottom:1px solid #a8a8a8"></div>
<svg class="abs" style="left:139px;top:329px" width="15" height="15" viewBox="0 0 15 15">
<rect x="0" y="0" width="14.5" height="14.5" rx="3.5" fill="#3a3a3a"/>
<path d="M4 4.5 V9.5 Q4 11 5.5 11 H9.5 Q11 11 11 9.5 V4.5 M7.5 6.5 V11" fill="none" stroke="#e6e6e6" stroke-width="1.2"/>
</svg>
<div class="t" style="left:159px;top:329px;font-size:12.2px;line-height:16px;color:#8a8a8a">设备模拟调试工具 V20220607</div>
<div class="abs" style="left:861px;top:337px;width:10px;height:1px;background:#666"></div>
<div class="abs" style="left:906px;top:332px;width:10px;height:10px;border:1px solid #666"></div>
<svg class="abs" style="left:951px;top:331px" width="12" height="12" viewBox="0 0 12 12"><path d="M1 1 L11 11 M11 1 L1 11" stroke="#666" stroke-width="1"/></svg>
<div class="abs" style="left:138px;top:361px;width:668px;height:523px;background:#ffffff;border:1px solid #a9a9a9"></div>
<div class="abs" style="left:791px;top:362px;width:14px;height:522px;background:#f0f0f0;border-left:1px solid #e6e6e6"></div>
<div class="abs" style="left:792px;top:376px;width:13px;height:48px;background:#cdcdcd"></div>
<svg class="abs" style="left:792px;top:364px" width="13" height="10" viewBox="0 0 13 10"><path d="M2.5 7 L6.5 3 L10.5 7 Z" fill="#606060"/></svg>
<div class="t" style="left:143px;top:363px;font-size:12.5px;line-height:17px;color:#7a5a80">时间[16:15:16 211] 网络接收: 01 03 00 00 00 08 44 0C</div>
<div class="t" style="left:143px;top:380px;font-size:12.5px;line-height:17px;color:#2f6f8f">时间[16:15:16 211] 网络发送: 01 03 10 00 14 03 11 00 3C 00 58 00 4B 00 3E 00 20 00 63 07 F5</div>
<div class="t" style="left:143px;top:397px;font-size:12.5px;line-height:17px;color:#7a5a80">时间[16:15:17 211] 网络接收: 01 03 00 00 00 08 44 0C</div>
<div class="t" style="left:143px;top:414px;font-size:12.5px;line-height:17px;color:#2f6f8f">时间[16:15:17 211] 网络发送: 01 03 10 00 14 03 11 00 3C 00 58 00 4B 00 3E 00 20 00 63 07 F5</div>
<div class="t" style="left:143px;top:431px;font-size:12.5px;line-height:17px;color:#7a5a80">时间[16:15:18 211] 网络接收: 01 03 00 00 00 08 44 0C</div>
<div class="t" style="left:143px;top:448px;font-size:12.5px;line-height:17px;color:#2f6f8f">时间[16:15:18 211] 网络发送: 01 03 10 00 14 03 11 00 3C 00 58 00 4B 00 3E 00 20 00 63 07 F5</div>
<div class="t" style="left:143px;top:465px;font-size:12.5px;line-height:17px;color:#7a5a80">时间[16:15:19 211] 网络接收: 01 03 00 00 00 08 44 0C</div>
<div class="t" style="left:143px;top:482px;font-size:12.5px;line-height:17px;color:#2f6f8f">时间[16:15:19 211] 网络发送: 01 03 10 00 14 03 11 00 3C 00 58 00 4B 00 3E 00 20 00 63 07 F5</div>
<div class="t" style="left:143px;top:499px;font-size:12.5px;line-height:17px;color:#7a5a80">时间[16:15:20 211] 网络接收: 01 03 00 00 00 08 44 0C</div>
<div class="t" style="left:143px;top:516px;font-size:12.5px;line-height:17px;color:#2f6f8f">时间[16:15:20 211] 网络发送: 01 03 10 00 14 03 11 00 3C 00 58 00 4B 00 3E 00 20 00 63 07 F5</div>
<div class="t" style="left:143px;top:533px;font-size:12.5px;line-height:17px;color:#7a5a80">时间[16:15:21 211] 网络接收: 01 03 00 00 00 08 44 0C</div>
<div class="t" style="left:143px;top:550px;font-size:12.5px;line-height:17px;color:#2f6f8f">时间[16:15:21 211] 网络发送: 01 03 10 00 14 03 11 00 3C 00 58 00 4B 00 3E 00 20 00 63 07 F5</div>
<div class="t" style="left:143px;top:567px;font-size:12.5px;line-height:17px;color:#7a5a80">时间[16:15:22 211] 网络接收: 01 03 00 00 00 08 44 0C</div>
<div class="t" style="left:143px;top:584px;font-size:12.5px;line-height:17px;color:#2f6f8f">时间[16:15:22 211] 网络发送: 01 03 10 00 14 03 11 00 3C 00 58 00 4B 00 3E 00 20 00 63 07 F5</div>
<div class="t" style="left:143px;top:601px;font-size:12.5px;line-height:17px;color:#7a5a80">时间[16:15:23 211] 网络接收: 01 03 00 00 00 08 44 0C</div>
<div class="t" style="left:143px;top:618px;font-size:12.5px;line-height:17px;color:#2f6f8f">时间[16:15:23 211] 网络发送: 01 03 10 00 14 03 11 00 3C 00 58 00 4B 00 3E 00 20 00 63 07 F5</div>
<div class="t" style="left:143px;top:635px;font-size:12.5px;line-height:17px;color:#7a5a80">时间[16:15:24 211] 网络接收: 01 03 00 00 00 08 44 0C</div>
<div class="t" style="left:143px;top:652px;font-size:12.5px;line-height:17px;color:#2f6f8f">时间[16:15:24 211] 网络发送: 01 03 10 00 14 03 11 00 3C 00 58 00 4B 00 3E 00 20 00 63 07 F5</div>
<div class="t" style="left:143px;top:669px;font-size:12.5px;line-height:17px;color:#7a5a80">时间[16:15:25 211] 网络接收: 01 03 00 00 00 08 44 0C</div>
<div class="t" style="left:143px;top:686px;font-size:12.5px;line-height:17px;color:#2f6f8f">时间[16:15:25 211] 网络发送: 01 03 10 00 14 03 11 00 3C 00 58 00 4B 00 3E 00 20 00 63 07 F5</div>
<div class="t" style="left:143px;top:703px;font-size:12.5px;line-height:17px;color:#7a5a80">时间[16:15:26 211] 网络接收: 01 03 00 00 00 08 44 0C</div>
<div class="t" style="left:143px;top:720px;font-size:12.5px;line-height:17px;color:#2f6f8f">时间[16:15:26 211] 网络发送: 01 03 10 00 14 03 11 00 3C 00 58 00 4B 00 3E 00 20 00 63 07 F5</div>
<div class="t" style="left:143px;top:737px;font-size:12.5px;line-height:17px;color:#7a5a80">时间[16:15:27 211] 网络接收: 01 03 00 00 00 08 44 0C</div>
<div class="t" style="left:143px;top:754px;font-size:12.5px;line-height:17px;color:#2f6f8f">时间[16:15:27 211] 网络发送: 01 03 10 00 14 03 11 00 3C 00 58 00 4B 00 3E 00 20 00 63 07 F5</div>
<div class="t" style="left:143px;top:771px;font-size:12.5px;line-height:17px;color:#7a5a80">时间[16:15:28 211] 网络接收: 01 03 00 00 00 08 44 0C</div>
<div class="t" style="left:143px;top:788px;font-size:12.5px;line-height:17px;color:#2f6f8f">时间[16:15:28 211] 网络发送: 01 03 10 00 14 03 11 00 3C 00 58 00 4B 00 3E 00 20 00 63 07 F5</div>
<div class="t" style="left:143px;top:805px;font-size:12.5px;line-height:17px;color:#7a5a80">时间[16:15:29 211] 网络接收: 01 03 00 00 00 08 44 0C</div>
<div class="t" style="left:143px;top:822px;font-size:12.5px;line-height:17px;color:#2f6f8f">时间[16:15:29 211] 网络发送: 01 03 10 00 14 03 11 00 3C 00 58 00 4B 00 3E 00 20 00 63 07 F5</div>
<div class="t" style="left:143px;top:839px;font-size:12.5px;line-height:17px;color:#7a5a80">时间[16:15:30 211] 网络接收: 01 03 00 00 00 08 44 0C</div>
<div class="t" style="left:143px;top:856px;font-size:12.5px;line-height:17px;color:#2f6f8f">时间[16:15:30 211] 网络发送: 01 03 10 00 14 03 11 00 3C 00 58 00 4B 00 3E 00 20 00 63 07 F5</div>
<div class="t" style="left:143px;top:873px;font-size:12.5px;line-height:17px;color:#7a5a80">时间[16:15:31 211] 网络接收: 01 03 00 00 00 08 44 0C</div>
<div class="abs" style="left:812px;top:361px;width:159px;height:523px;border:1px solid #b9b9b9;background:#f7f7f7"></div>
<div class="t" style="left:820px;top:373px;font-size:12.3px;line-height:18px;color:#222">设备</div>
<div class="abs" style="left:850px;top:370px;width:113px;height:24px;background:linear-gradient(#f9f9f9,#ececec);border:1px solid #c3c3c3;border-radius:2px"></div>
<div class="t" style="left:855px;top:373px;font-size:12.5px;line-height:18px;color:#222">FC-1003-8</div>
<svg class="abs" style="left:947px;top:379px" width="10" height="6" viewBox="0 0 10 6"><path d="M1 1 H9 L5 5 Z" fill="#555"/></svg>
<div class="t" style="left:820px;top:404px;font-size:12.3px;line-height:18px;color:#222">地址</div>
<div class="abs" style="left:850px;top:401px;width:113px;height:24px;background:#ffffff;border:1px solid #c3c3c3;border-radius:2px"></div>
<div class="abs" style="left:942px;top:402px;width:20px;height:22px;background:linear-gradient(#f7f7f7,#e9e9e9);border-left:1px solid #d0d0d0"></div>
<div class="t" style="left:855px;top:404px;font-size:12.5px;line-height:18px;color:#222">1</div>
<svg class="abs" style="left:947px;top:410px" width="10" height="6" viewBox="0 0 10 6"><path d="M1 1 H9 L5 5 Z" fill="#555"/></svg>
<div class="t" style="left:820px;top:435px;font-size:12.3px;line-height:18px;color:#222">串口</div>
<div class="abs" style="left:850px;top:432px;width:113px;height:24px;background:linear-gradient(#f9f9f9,#ececec);border:1px solid #c3c3c3;border-radius:2px"></div>
<div class="t" style="left:855px;top:435px;font-size:12.5px;line-height:18px;color:#222">COM2</div>
<svg class="abs" style="left:947px;top:441px" width="10" height="6" viewBox="0 0 10 6"><path d="M1 1 H9 L5 5 Z" fill="#555"/></svg>
<div class="t" style="left:820px;top:466px;font-size:12.3px;line-height:18px;color:#222">波特</div>
<div class="abs" style="left:850px;top:463px;width:113px;height:24px;background:linear-gradient(#f9f9f9,#ececec);border:1px solid #c3c3c3;border-radius:2px"></div>
<div class="t" style="left:855px;top:466px;font-size:12.5px;line-height:18px;color:#222">9600</div>
<svg class="abs" style="left:947px;top:472px" width="10" height="6" viewBox="0 0 10 6"><path d="M1 1 H9 L5 5 Z" fill="#555"/></svg><div class="abs" style="left:198px;top:491px;width:1056px;height:393px;background:#f0f0f0;border:1px solid #3a84d6"></div>
<div class="abs" style="left:199px;top:492px;width:1054px;height:48px;background:#ffffff"></div>
<svg class="abs" style="left:206px;top:498px" width="17" height="17" viewBox="0 0 17 17">
<g fill="#5f95e4">
<circle cx="8.5" cy="8.5" r="6.2"/>
<circle cx="8.5" cy="1.8" r="1.5"/><circle cx="8.5" cy="15.2" r="1.5"/>
<circle cx="1.8" cy="8.5" r="1.5"/><circle cx="15.2" cy="8.5" r="1.5"/>
<circle cx="3.8" cy="3.8" r="1.5"/><circle cx="13.2" cy="13.2" r="1.5"/>
<circle cx="3.8" cy="13.2" r="1.5"/><circle cx="13.2" cy="3.8" r="1.5"/>
</g>
<circle cx="8.3" cy="8.3" r="4.3" fill="#e3eefc"/>
<path d="M10.5 5.2 A3 3 0 1 0 11.2 9" fill="none" stroke="#5f95e4" stroke-width="1.4"/>
<path d="M9 9 L13 13" stroke="#5f95e4" stroke-width="1.8"/>
</svg>
<div class="t d" style="left:228px;top:498px;font-size:12.2px;line-height:18px;color:#1a1a1a">数据库对象管理工具 - General - [ nodeinfo ]</div>
<div class="abs" style="left:1133px;top:506px;width:11px;height:1px;background:#111"></div>
<div class="abs" style="left:1178px;top:500px;width:11px;height:11px;border:1px solid #111"></div>
<svg class="abs" style="left:1223px;top:499px" width="14" height="14" viewBox="0 0 14 14"><path d="M1.5 1.5 L12.5 12.5 M12.5 1.5 L1.5 12.5" stroke="#111" stroke-width="1.1"/></svg>
<div class="t d" style="left:206px;top:523px;font-size:12px;line-height:17px;color:#1a1a1a">文件(F)</div>
<div class="t d" style="left:258px;top:523px;font-size:12px;line-height:17px;color:#1a1a1a">编辑(E)</div>
<div class="t d" style="left:311px;top:523px;font-size:12px;line-height:17px;color:#1a1a1a">SQL编辑器</div>
<div class="t d" style="left:384px;top:523px;font-size:12px;line-height:17px;color:#1a1a1a">窗口(W)</div>
<div class="t d" style="left:442px;top:523px;font-size:12px;line-height:17px;color:#1a1a1a">帮助(H)</div>
<svg class="abs" style="left:0;top:0" width="1381" height="884"><rect x="201" y="546" width="1" height="1.5" fill="#777"/><rect x="201" y="549" width="1" height="1.5" fill="#777"/><rect x="201" y="552" width="1" height="1.5" fill="#777"/><rect x="201" y="555" width="1" height="1.5" fill="#777"/><rect x="201" y="558" width="1" height="1.5" fill="#777"/><rect x="285" y="546" width="1" height="1.5" fill="#777"/><rect x="285" y="549" width="1" height="1.5" fill="#777"/><rect x="285" y="552" width="1" height="1.5" fill="#777"/><rect x="285" y="555" width="1" height="1.5" fill="#777"/><rect x="285" y="558" width="1" height="1.5" fill="#777"/><rect x="358" y="546" width="1" height="1.5" fill="#777"/><rect x="358" y="549" width="1" height="1.5" fill="#777"/><rect x="358" y="552" width="1" height="1.5" fill="#777"/><rect x="358" y="555" width="1" height="1.5" fill="#777"/><rect x="358" y="558" width="1" height="1.5" fill="#777"/><rect x="410" y="546" width="1" height="1.5" fill="#777"/><rect x="410" y="549" width="1" height="1.5" fill="#777"/><rect x="410" y="552" width="1" height="1.5" fill="#777"/><rect x="410" y="555" width="1" height="1.5" fill="#777"/><rect x="410" y="558" width="1" height="1.5" fill="#777"/><rect x="484" y="546" width="1" height="1.5" fill="#777"/><rect x="484" y="549" width="1" height="1.5" fill="#777"/><rect x="484" y="552" width="1" height="1.5" fill="#777"/><rect x="484" y="555" width="1" height="1.5" fill="#777"/><rect x="484" y="558" width="1" height="1.5" fill="#777"/></svg>
<svg class="abs" style="left:206px;top:545px" width="17" height="17" viewBox="0 0 17 17">
<path d="M3 1 H15 V13 Q15 15 13 15 H1 Q3 15 3 13 Z" fill="#dfe9f6" stroke="#5b8fcf" stroke-width="1"/>
<path d="M5 4 H13 M5 6.5 H13 M5 9 H13 M5 11.5 H11" stroke="#5b8fcf" stroke-width="1"/>
<rect x="1" y="14" width="12" height="2" fill="#5b8fcf"/>
</svg>
<div class="t d" style="left:227px;top:545px;font-size:12px;line-height:17px;color:#1a1a1a">新建查询</div>
<svg class="abs" style="left:314px;top:546px" width="16" height="15" viewBox="0 0 16 15">
<rect x="1" y="1" width="14" height="13" fill="#e6e6e6" stroke="#b5b5b5"/>
<rect x="4" y="1" width="8" height="5" fill="#f4f4f4" stroke="#b5b5b5"/>
<rect x="4" y="9" width="8" height="5" fill="#f4f4f4" stroke="#b5b5b5"/>
</svg>
<svg class="abs" style="left:365px;top:546px" width="40" height="15" viewBox="0 0 40 15">
<path d="M2 7 L7 2 V5 Q14 5 14 10 Q12 8 7 8.5 V12 Z" fill="#ececec" stroke="#b0b0b0"/>
<path d="M36 7 L31 2 V5 Q24 5 24 10 Q26 8 31 8.5 V12 Z" fill="#ececec" stroke="#b0b0b0"/>
</svg>
<svg class="abs" style="left:416px;top:545px" width="14" height="17" viewBox="0 0 14 17">
<path d="M3 1 L10 12 M11 1 L4 12" stroke="#9a9a9a" stroke-width="1.2"/>
<circle cx="3.5" cy="13.5" r="2.3" fill="none" stroke="#9a9a9a" stroke-width="1.2"/>
<circle cx="10.5" cy="13.5" r="2.3" fill="none" stroke="#9a9a9a" stroke-width="1.2"/>
</svg>
<svg class="abs" style="left:439px;top:545px" width="17" height="17" viewBox="0 0 17 17">
<rect x="1" y="1" width="15" height="15" fill="#eaf2fc" stroke="#3f7fd4" stroke-width="1.4"/>
<path d="M8.5 4.5 V12.5 M4.5 8.5 H12.5" stroke="#3f7fd4" stroke-width="2"/>
</svg>
<svg class="abs" style="left:463px;top:545px" width="16" height="17" viewBox="0 0 16 17">
<rect x="1" y="2.5" width="11" height="13" fill="#e8e8e8" stroke="#b8b8b8"/>
<rect x="4" y="1" width="5" height="3" fill="#d0d0d0" stroke="#b8b8b8"/>
<rect x="7" y="8" width="8" height="8" fill="#f2f2f2" stroke="#b8b8b8"/>
</svg>
<div class="abs" style="left:492px;top:542px;width:144px;height:21px;background:#fff;border:1px solid #c8c8c8"></div>
<div class="abs" style="left:619px;top:543px;width:16px;height:19px;background:#f0f0f0"></div>
<svg class="abs" style="left:502px;top:548px" width="11" height="11" viewBox="0 0 11 11"><rect x="1" y="3" width="8" height="7" fill="#d8d8d8" stroke="#9a9a9a"/><path d="M3 6 L5 8 L9 2" stroke="#7a7a7a" fill="none"/></svg>
<div class="t d" style="left:514px;top:545px;font-size:12px;line-height:17px;color:#8a8a8a">KingBaseES</div>
<svg class="abs" style="left:622px;top:549px" width="10" height="8" viewBox="0 0 10 8"><path d="M1 1.5 L5 5.5 L9 1.5" stroke="#333" stroke-width="1.5" fill="none"/></svg>
<div class="abs" style="left:642px;top:542px;width:108px;height:21px;background:#fff;border:1px solid #c8c8c8"></div>
<div class="abs" style="left:733px;top:543px;width:16px;height:19px;background:#f0f0f0"></div>
<svg class="abs" style="left:644px;top:544px" width="17" height="17" viewBox="0 0 17 17">
<ellipse cx="8" cy="3.5" rx="7" ry="2.5" fill="#2f86e8"/>
<path d="M1 3.5 V13 Q1 15.5 8 15.5 Q15 15.5 15 13 V3.5 Q15 6 8 6 Q1 6 1 3.5 Z" fill="#2f86e8"/>
<path d="M1 7.5 Q1 10 8 10 Q15 10 15 7.5" stroke="#fff" stroke-width="1.2" fill="none"/>
<path d="M1 11 Q1 13.5 8 13.5 Q15 13.5 15 11" stroke="#fff" stroke-width="1.2" fill="none"/>
<path d="M10 11 L15 15.5 M15 12 V15.5 H11.5" stroke="#1a3f7a" stroke-width="1.3" fill="none"/>
</svg>
<div class="t d" style="left:665px;top:545px;font-size:12px;line-height:17px;color:#1a1a1a">iotsystem</div>
<svg class="abs" style="left:736px;top:549px" width="10" height="8" viewBox="0 0 10 8"><path d="M1 1.5 L5 5.5 L9 1.5" stroke="#333" stroke-width="1.5" fill="none"/></svg>
<svg class="abs" style="left:771px;top:546px" width="12" height="14" viewBox="0 0 12 14"><path d="M2 1 L10 7 L2 13 Z" fill="#e4e4e4" stroke="#a8a8a8"/></svg>
<svg class="abs" style="left:836px;top:544px" width="18" height="18" viewBox="0 0 18 18">
<ellipse cx="9" cy="10.5" rx="5" ry="6" fill="#3d8ee6"/>
<circle cx="9" cy="4" r="2.6" fill="#3d8ee6"/>
<path d="M1.5 6 L4.5 8 M16.5 6 L13.5 8 M1 11 H4 M17 11 H14 M1.5 16 L4.5 14 M16.5 16 L13.5 14" stroke="#3d8ee6" stroke-width="1.6"/>
<path d="M9 6 V16.5" stroke="#dfeefe" stroke-width="1"/>
</svg>
<div class="abs" style="left:201px;top:566px;width:248px;height:318px;background:#ffffff;border:1px solid #c4c9d0;border-radius:6px 6px 0 0"></div>
<div class="abs" style="left:202px;top:567px;width:246px;height:23px;background:#f2f2f2;border-radius:6px 6px 0 0"></div>
<svg class="abs" style="left:202px;top:566px" width="246" height="26" viewBox="0 0 246 26">
<path d="M0 26 V8 Q0 1 7 1 H100 Q112 1 120 12 Q128 23 140 23 H246 V26 Z" fill="#f8f9fb"/>
<path d="M0 24 V8 Q0 1 7 1 H100 Q112 1 120 12 Q128 23 140 23 H246" fill="none" stroke="#b6bcc6" stroke-width="1"/>
</svg>
<svg class="abs" style="left:205px;top:569px" width="16" height="17" viewBox="0 0 16 17">
<ellipse cx="5.5" cy="3" rx="4.5" ry="2" fill="#b9d2ee" stroke="#7ea6d6" stroke-width="0.8"/>
<path d="M1 3 V11 Q1 13 5.5 13 Q10 13 10 11 V3" fill="#b9d2ee" stroke="#7ea6d6" stroke-width="0.8"/>
<rect x="7" y="8" width="8.5" height="8" rx="1.5" fill="#c9dcf2" stroke="#7ea6d6" stroke-width="0.8"/>
</svg>
<div class="t d" style="left:224px;top:569px;font-size:12px;line-height:17px;color:#1a1a1a;letter-spacing:0">数据库导航</div>
<svg class="abs" style="left:290px;top:571px" width="12" height="12" viewBox="0 0 12 12"><path d="M1.5 1.5 L10.5 10.5 M10.5 1.5 L1.5 10.5" stroke="#666" stroke-width="2.4"/><path d="M1.5 1.5 L10.5 10.5 M10.5 1.5 L1.5 10.5" stroke="#fff" stroke-width="1"/></svg>
<div class="abs" style="left:403px;top:571px;width:10px;height:4px;border:1px solid #555;background:#fff"></div>
<div class="abs" style="left:426px;top:571px;width:10px;height:10px;border:1px solid #555;border-top-width:2px;background:#fff"></div>
<div class="abs" style="left:202px;top:590px;width:246px;height:24px;background:#f2f2f2"></div>
<svg class="abs" style="left:321px;top:594px" width="16" height="16" viewBox="0 0 16 16">
<ellipse cx="7" cy="2.5" rx="6" ry="2" fill="#3d8ee6"/>
<path d="M1 2.5 V12.5 Q1 14.5 7 14.5 Q13 14.5 13 12.5 V2.5 Q13 4.5 7 4.5 Q1 4.5 1 2.5Z" fill="#3d8ee6"/>
<path d="M1 6.5 Q1 8.5 7 8.5 Q13 8.5 13 6.5 M1 10 Q1 12 7 12 Q13 12 13 10" stroke="#fff" fill="none"/>
<circle cx="12" cy="12" r="3.3" fill="#fff" stroke="#3d8ee6" stroke-width="1.2"/>
</svg>
<div class="t d" style="left:342px;top:594px;font-size:12px;line-height:17px;color:#1a1a1a">新建连接</div>
<svg class="abs" style="left:425px;top:593px" width="17" height="16" viewBox="0 0 17 16">
<path d="M5 1 L1.5 4.5 L5 8 M1.5 4.5 H13 L10 8" stroke="#d79a16" stroke-width="1.6" fill="none"/>
<path d="M12 15 L15.5 11.5 L12 8 M15.5 11.5 H4 L7 8" stroke="#e9b42a" stroke-width="1.6" fill="none"/>
</svg>
<div class="abs" style="left:204px;top:614px;width:242px;height:21px;background:#fff;border:1px solid #adadad"></div>
<div class="t d" style="left:207px;top:616px;font-size:12px;line-height:17px;color:#6e6e6e;letter-spacing:0">输入表格名称的一部分</div>
<div class="abs" style="left:430px;top:635px;width:15px;height:249px;background:#f0f0f0"></div>
<div class="abs" style="left:431px;top:652px;width:13px;height:232px;background:#cdcdcd"></div>
<svg class="abs" style="left:431px;top:638px" width="13" height="10" viewBox="0 0 13 10"><path d="M2.5 7 L6.5 3 L10.5 7" stroke="#505050" stroke-width="1.5" fill="none"/></svg>
<div class="abs" style="left:202px;top:635px;width:228px;height:249px;overflow:hidden">
<svg class="abs" style="left:8px;top:6px" width="10" height="8" viewBox="0 0 10 8"><path d="M1.5 2 L5 5.5 L8.5 2" stroke="#444" stroke-width="1.3" fill="none"/></svg>
<svg class="abs" style="left:24px;top:2px" width="16" height="17" viewBox="0 0 16 17">
<path d="M1 2.5 Q1 0.5 5 0.5 Q9 0.5 9 2.5 V13 Q9 15 5 15 Q1 15 1 13 Z" fill="#c2d6ee" stroke="#8aaad2" stroke-width="0.8"/>
<rect x="7" y="8" width="8.5" height="8.5" fill="#2e9a54"/>
<path d="M9 12 L10.8 14 L14 10" stroke="#fff" stroke-width="1.4" fill="none"/>
</svg>
<div class="t d" style="left:44px;top:1px;font-size:12px;line-height:18px;color:#1a1a1a;">KingBaseES</div>
<svg class="abs" style="left:27px;top:26px" width="10" height="8" viewBox="0 0 10 8"><path d="M1.5 2 L5 5.5 L8.5 2" stroke="#444" stroke-width="1.3" fill="none"/></svg>
<svg class="abs" style="left:43px;top:22px" width="16" height="15" viewBox="0 0 16 15">
<path d="M0.5 2 Q0.5 1 1.5 1 H6 L7.5 3 H14.5 Q15.5 3 15.5 4 V14 H0.5 Z" fill="#5ea3ee"/>
<path d="M0.5 14 L2.5 6 H15.5 V14 Z" fill="#8cc0f7"/>
<path d="M11 1 L15.5 1 V5" stroke="#c9e2fc" fill="none"/>
</svg>
<div class="t d" style="left:63px;top:21px;font-size:12px;line-height:18px;color:#1a1a1a;">数据库</div>
<svg class="abs" style="left:47px;top:45px" width="8" height="10" viewBox="0 0 8 10"><path d="M2 1.5 L5.5 5 L2 8.5" stroke="#9a9a9a" stroke-width="1.3" fill="none"/></svg>
<svg class="abs" style="left:62px;top:42px" width="16" height="16" viewBox="0 0 16 16">
<path d="M1 3 Q1 0.5 8 0.5 Q15 0.5 15 3 V13 Q15 15.5 8 15.5 Q1 15.5 1 13 Z" fill="#2f86e8"/>
<path d="M1 5.5 Q1 7.5 8 7.5 Q15 7.5 15 5.5 M1 9.7 Q1 11.7 8 11.7 Q15 11.7 15 9.7" stroke="#fff" stroke-width="1.4" fill="none"/>
</svg>
<div class="t d" style="left:82px;top:41px;font-size:12px;line-height:18px;color:#1a1a1a;">dbtool</div>
<svg class="abs" style="left:46px;top:66px" width="10" height="8" viewBox="0 0 10 8"><path d="M1.5 2 L5 5.5 L8.5 2" stroke="#444" stroke-width="1.3" fill="none"/></svg>
<svg class="abs" style="left:62px;top:62px" width="16" height="16" viewBox="0 0 16 16">
<path d="M1 3 Q1 0.5 8 0.5 Q15 0.5 15 3 V13 Q15 15.5 8 15.5 Q1 15.5 1 13 Z" fill="#2f86e8"/>
<path d="M1 5.5 Q1 7.5 8 7.5 Q15 7.5 15 5.5 M1 9.7 Q1 11.7 8 11.7 Q15 11.7 15 9.7" stroke="#fff" stroke-width="1.4" fill="none"/>
</svg>
<div class="t d" style="left:82px;top:61px;font-size:12px;line-height:18px;color:#1a1a1a;">iotsystem</div>
<svg class="abs" style="left:65px;top:86px" width="10" height="8" viewBox="0 0 10 8"><path d="M1.5 2 L5 5.5 L8.5 2" stroke="#444" stroke-width="1.3" fill="none"/></svg>
<svg class="abs" style="left:81px;top:82px" width="16" height="15" viewBox="0 0 16 15">
<path d="M0.5 2 Q0.5 1 1.5 1 H6 L7.5 3 H14.5 Q15.5 3 15.5 4 V14 H0.5 Z" fill="#5ea3ee"/>
<path d="M0.5 14 L2.5 6 H15.5 V14 Z" fill="#8cc0f7"/>
<path d="M11 1 L15.5 1 V5" stroke="#c9e2fc" fill="none"/>
</svg>
<div class="t d" style="left:101px;top:81px;font-size:12px;line-height:18px;color:#1a1a1a;">模式</div>
<svg class="abs" style="left:85px;top:105px" width="8" height="10" viewBox="0 0 8 10"><path d="M2 1.5 L5.5 5 L2 8.5" stroke="#9a9a9a" stroke-width="1.3" fill="none"/></svg>
<svg class="abs" style="left:100px;top:102px" width="16" height="16" viewBox="0 0 16 16">
<circle cx="8" cy="5" r="4" fill="#3d8ee6"/>
<path d="M1 16 Q1 10 8 10 Q15 10 15 16 Z" fill="#3d8ee6"/>
</svg>
<div class="t d" style="left:120px;top:101px;font-size:12px;line-height:18px;color:#1a1a1a;">information_schema</div>
<svg class="abs" style="left:84px;top:126px" width="10" height="8" viewBox="0 0 10 8"><path d="M1.5 2 L5 5.5 L8.5 2" stroke="#444" stroke-width="1.3" fill="none"/></svg>
<svg class="abs" style="left:100px;top:122px" width="16" height="16" viewBox="0 0 16 16">
<circle cx="8" cy="5" r="4" fill="#3d8ee6"/>
<path d="M1 16 Q1 10 8 10 Q15 10 15 16 Z" fill="#3d8ee6"/>
</svg>
<div class="t d" style="left:120px;top:121px;font-size:12px;line-height:18px;color:#1a1a1a;font-weight:bold;">public</div>
<svg class="abs" style="left:103px;top:146px" width="10" height="8" viewBox="0 0 10 8"><path d="M1.5 2 L5 5.5 L8.5 2" stroke="#444" stroke-width="1.3" fill="none"/></svg>
<svg class="abs" style="left:119px;top:142px" width="16" height="15" viewBox="0 0 16 15">
<path d="M0.5 2 Q0.5 1 1.5 1 H6 L7.5 3 H14.5 Q15.5 3 15.5 4 V14 H0.5 Z" fill="#5ea3ee"/>
<path d="M0.5 14 L2.5 6 H15.5 V14 Z" fill="#8cc0f7"/>
<path d="M11 1 L15.5 1 V5" stroke="#c9e2fc" fill="none"/>
</svg>
<div class="t d" style="left:139px;top:141px;font-size:12px;line-height:18px;color:#1a1a1a;">表</div>
<svg class="abs" style="left:123px;top:165px" width="8" height="10" viewBox="0 0 8 10"><path d="M2 1.5 L5.5 5 L2 8.5" stroke="#9a9a9a" stroke-width="1.3" fill="none"/></svg>
<svg class="abs" style="left:138px;top:162px" width="16" height="16" viewBox="0 0 16 16">
<rect x="0.5" y="0.5" width="15" height="15" fill="#f3f7fc" stroke="#c9d9ee"/>
<rect x="3" y="3" width="10" height="10" fill="#fff" stroke="#4f8fdc" stroke-width="1"/>
<path d="M3 5.5 H13 M3 8 H13 M3 10.5 H13" stroke="#4f8fdc" stroke-width="1"/>
</svg>
<div class="t d" style="left:158px;top:161px;font-size:12px;line-height:18px;color:#1a1a1a;">alarmlink</div>
<svg class="abs" style="left:123px;top:185px" width="8" height="10" viewBox="0 0 8 10"><path d="M2 1.5 L5.5 5 L2 8.5" stroke="#9a9a9a" stroke-width="1.3" fill="none"/></svg>
<svg class="abs" style="left:138px;top:182px" width="16" height="16" viewBox="0 0 16 16">
<rect x="0.5" y="0.5" width="15" height="15" fill="#f3f7fc" stroke="#c9d9ee"/>
<rect x="3" y="3" width="10" height="10" fill="#fff" stroke="#4f8fdc" stroke-width="1"/>
<path d="M3 5.5 H13 M3 8 H13 M3 10.5 H13" stroke="#4f8fdc" stroke-width="1"/>
</svg>
<div class="t d" style="left:158px;top:181px;font-size:12px;line-height:18px;color:#1a1a1a;">alarmlog</div>
<svg class="abs" style="left:123px;top:205px" width="8" height="10" viewBox="0 0 8 10"><path d="M2 1.5 L5.5 5 L2 8.5" stroke="#9a9a9a" stroke-width="1.3" fill="none"/></svg>
<svg class="abs" style="left:138px;top:202px" width="16" height="16" viewBox="0 0 16 16">
<rect x="0.5" y="0.5" width="15" height="15" fill="#f3f7fc" stroke="#c9d9ee"/>
<rect x="3" y="3" width="10" height="10" fill="#fff" stroke="#4f8fdc" stroke-width="1"/>
<path d="M3 5.5 H13 M3 8 H13 M3 10.5 H13" stroke="#4f8fdc" stroke-width="1"/>
</svg>
<div class="t d" style="left:158px;top:201px;font-size:12px;line-height:18px;color:#1a1a1a;">deviceinfo</div>
<svg class="abs" style="left:123px;top:225px" width="8" height="10" viewBox="0 0 8 10"><path d="M2 1.5 L5.5 5 L2 8.5" stroke="#9a9a9a" stroke-width="1.3" fill="none"/></svg>
<svg class="abs" style="left:138px;top:222px" width="16" height="16" viewBox="0 0 16 16">
<rect x="0.5" y="0.5" width="15" height="15" fill="#f3f7fc" stroke="#c9d9ee"/>
<rect x="3" y="3" width="10" height="10" fill="#fff" stroke="#4f8fdc" stroke-width="1"/>
<path d="M3 5.5 H13 M3 8 H13 M3 10.5 H13" stroke="#4f8fdc" stroke-width="1"/>
</svg>
<div class="t d" style="left:158px;top:221px;font-size:12px;line-height:18px;color:#1a1a1a;">nodedata</div>
<div class="abs" style="left:135px;top:242px;width:79px;height:18px;background:#dcdcdc"></div>
<svg class="abs" style="left:123px;top:245px" width="8" height="10" viewBox="0 0 8 10"><path d="M2 1.5 L5.5 5 L2 8.5" stroke="#9a9a9a" stroke-width="1.3" fill="none"/></svg>
<svg class="abs" style="left:138px;top:242px" width="16" height="16" viewBox="0 0 16 16">
<rect x="0.5" y="0.5" width="15" height="15" fill="#f3f7fc" stroke="#c9d9ee"/>
<rect x="3" y="3" width="10" height="10" fill="#fff" stroke="#4f8fdc" stroke-width="1"/>
<path d="M3 5.5 H13 M3 8 H13 M3 10.5 H13" stroke="#4f8fdc" stroke-width="1"/>
</svg>
<div class="t d" style="left:158px;top:241px;font-size:12px;line-height:18px;color:#1a1a1a;">nodeinfo</div>
</div>
<div class="abs" style="left:454px;top:566px;width:797px;height:318px;background:#f0f0f0"></div>
<svg class="abs" style="left:454px;top:564px" width="797" height="30" viewBox="0 0 797 30">
<defs><linearGradient id="tg" x1="0" y1="0" x2="0" y2="1"><stop offset="0" stop-color="#e6edf6"/><stop offset="1" stop-color="#b9cde6"/></linearGradient></defs>
<path d="M0 28 V9 Q0 2 7 2 H90 Q104 2 112 14 Q120 25 132 25 H797 V28 Z" fill="url(#tg)"/>
<path d="M0 28 V9 Q0 2 7 2 H90 Q104 2 112 14 Q120 25 132 25 H797" fill="none" stroke="#a9b9cf"/>
<rect x="0" y="25" width="797" height="3" fill="#a9bcd4"/>
</svg>
<svg class="abs" style="left:459px;top:569px" width="16" height="16" viewBox="0 0 16 16"><rect x="0.5" y="0.5" width="15" height="15" fill="#eef4fb" stroke="#b9cfea"/><rect x="2.5" y="2.5" width="11" height="11" fill="#fff" stroke="#4f8fdc"/><path d="M2.5 5 H13.5 M2.5 7.5 H13.5 M2.5 10 H13.5" stroke="#4f8fdc"/></svg>
<div class="t d" style="left:477px;top:570px;font-size:12px;line-height:17px;color:#1a1a1a">nodeinfo</div>
<svg class="abs" style="left:535px;top:571px" width="12" height="12" viewBox="0 0 12 12"><path d="M1.5 1.5 L10.5 10.5 M10.5 1.5 L1.5 10.5" stroke="#666" stroke-width="2.4"/><path d="M1.5 1.5 L10.5 10.5 M10.5 1.5 L1.5 10.5" stroke="#fff" stroke-width="1"/></svg>
<div class="abs" style="left:1205px;top:572px;width:10px;height:4px;border:1px solid #555;background:#fff"></div>
<div class="abs" style="left:1229px;top:572px;width:10px;height:10px;border:1px solid #555;border-top-width:2px;background:#fff"></div>
<div class="abs" style="left:454px;top:592px;width:796px;height:292px;background:#f3f3f3;border-left:2px solid #a9bcd4;border-right:2px solid #a9bcd4"></div>
<svg class="abs" style="left:456px;top:592px" width="792" height="24" viewBox="0 0 792 24">
<path d="M0 0 H44 Q53 0 60 10.5 Q67 21 78 21 H792 V24 H0 Z" fill="#ffffff"/>
<path d="M44 0.5 Q53 0.5 60 10.5 Q67 21 78 21 H792" fill="none" stroke="#a0a0a0"/>
</svg>
<svg class="abs" style="left:460px;top:595px" width="14" height="17" viewBox="0 0 14 17"><path d="M0.5 0.5 H9 L13.5 5 V16.5 H0.5 Z" fill="#e9f1fb" stroke="#6f9bd3"/><path d="M9 0.5 V5 H13.5" fill="none" stroke="#6f9bd3"/><rect x="1" y="13" width="12" height="3" fill="#5c93d8"/></svg>
<div class="t d" style="left:479px;top:595px;font-size:12px;line-height:17px;color:#1a1a1a">数据</div>
<div class="abs" style="left:456px;top:616px;width:792px;height:268px;background:#ffffff"></div>
<div class="abs" style="left:458px;top:619px;width:615px;height:22px;background:#fff;border:1px solid #c2c2c2"></div>
<svg class="abs" style="left:462px;top:622px" width="16" height="16" viewBox="0 0 16 16"><rect x="0.5" y="0.5" width="15" height="15" fill="#eef4fb" stroke="#b9cfea"/><rect x="2.5" y="2.5" width="11" height="11" fill="#fff" stroke="#4f8fdc"/><path d="M2.5 5 H13.5 M2.5 7.5 H13.5 M2.5 10 H13.5" stroke="#4f8fdc"/></svg>
<div class="t d" style="left:480px;top:623px;font-size:12px;line-height:17px;color:#2a9a2a">nodeinfo</div>
<div class="abs" style="left:537px;top:622px;width:1px;height:15px;background:#bbb"></div>
<div class="t d" style="left:543px;top:623px;font-size:12px;line-height:17px;color:#a8a8a8;font-style:italic;letter-spacing:0.15px">输入一个SQL表达式以过滤结果&nbsp;&nbsp;(使用 Ctrl+Space)</div>
<svg class="abs" style="left:1027px;top:627px" width="10" height="6" viewBox="0 0 10 6"><path d="M1 0.5 H9 L5 5 Z" fill="#555"/></svg>
<div class="abs" style="left:1044px;top:621px;width:1px;height:18px;background:#ccc"></div>
<svg class="abs" style="left:1048px;top:621px" width="20" height="18" viewBox="0 0 20 18"><rect x="1" y="2" width="10" height="13" fill="#f2f2f2" stroke="#bbb"/><rect x="5" y="5" width="10" height="12" fill="#f7f7f7" stroke="#bbb"/></svg>
<svg class="abs" style="left:1080px;top:620px" width="155" height="20" viewBox="0 0 155 20">
<path d="M2 2 H17 L11 9 V17 L8 15 V9 Z" fill="none" stroke="#3f8ae0" stroke-width="1.6"/>
<path d="M25 2 H40 L34 9 V16 L31 14 V9 Z" fill="none" stroke="#9a9a9a" stroke-width="1.4"/>
<path d="M35 11 L40 16 M40 11 L35 16" stroke="#9a9a9a" stroke-width="1.6"/>
<path d="M46 4 H56 L53 1 M46 9 H60 L57 6 M46 14 H56 L53 17 M56 14 L53 11" stroke="#3f8ae0" stroke-width="1.5" fill="none"/>
<rect x="64" y="3" width="1" height="1.5" fill="#888"/><rect x="64" y="7" width="1" height="1.5" fill="#888"/><rect x="64" y="11" width="1" height="1.5" fill="#888"/><rect x="64" y="15" width="1" height="1.5" fill="#888"/>
<path d="M79 9.5 L86 3 V7 H95 V12 H86 V16 Z" fill="#b5b5b5"/>
<path d="M103 8 H110 L106.5 12 Z" fill="#777"/>
<path d="M135 9.5 L128 3 V7 H119 V12 H128 V16 Z" fill="#b5b5b5"/>
<path d="M143 8 H150 L146.5 12 Z" fill="#777"/>
</svg>
<div class="abs" style="left:456px;top:645px;width:792px;height:22px;background:#f5f5f5;border-bottom:1px solid #a0a0a0"></div>
<div class="t d" style="left:511px;top:648px;font-size:12px;line-height:18px;color:#1a1a1a">nodeid</div>
<svg class="abs" style="left:492px;top:648px" width="16" height="15" viewBox="0 0 16 15"><path d="M2 4 V2 H14 V4 M2 2 V4" stroke="#5a5a5a" fill="none"/><text x="2" y="13.5" font-size="8.5" font-family="Liberation Sans" fill="#2b5d9c">1.1</text></svg>
<svg class="abs" style="left:558px;top:648px" width="16" height="17" viewBox="0 0 16 17"><path d="M3 2 V15 M0.5 12.5 L3 15 L5.5 12.5" stroke="#8fb2dd" stroke-width="1.3" fill="none"/><path d="M8 14 V1.5 L11 4" stroke="#8fb2dd" stroke-width="1.3" fill="none"/><path d="M10 8 H15 M10 10.5 H15 M10 13 H15" stroke="#a9c3e4" stroke-width="1.2"/></svg>
<div class="t d" style="left:604px;top:648px;font-size:12px;line-height:18px;color:#1a1a1a">positionid</div>
<svg class="abs" style="left:586px;top:649px" width="14" height="14" viewBox="0 0 14 14"><rect x="0.5" y="0.5" width="13" height="13" fill="#fff" stroke="#3b6cb0"/><path d="M3.5 4.5 V3.5 H10.5 V4.5 M7 3.5 V10.5 M5.2 10.5 H8.8" stroke="#1a1a1a" stroke-width="1.1" fill="none"/></svg>
<svg class="abs" style="left:669px;top:648px" width="16" height="17" viewBox="0 0 16 17"><path d="M3 2 V15 M0.5 12.5 L3 15 L5.5 12.5" stroke="#8fb2dd" stroke-width="1.3" fill="none"/><path d="M8 14 V1.5 L11 4" stroke="#8fb2dd" stroke-width="1.3" fill="none"/><path d="M10 8 H15 M10 10.5 H15 M10 13 H15" stroke="#a9c3e4" stroke-width="1.2"/></svg>
<div class="t d" style="left:715px;top:648px;font-size:12px;line-height:18px;color:#1a1a1a">devicename</div>
<svg class="abs" style="left:697px;top:649px" width="14" height="14" viewBox="0 0 14 14"><rect x="0.5" y="0.5" width="13" height="13" fill="#fff" stroke="#3b6cb0"/><path d="M3.5 4.5 V3.5 H10.5 V4.5 M7 3.5 V10.5 M5.2 10.5 H8.8" stroke="#1a1a1a" stroke-width="1.1" fill="none"/></svg>
<svg class="abs" style="left:791px;top:648px" width="16" height="17" viewBox="0 0 16 17"><path d="M3 2 V15 M0.5 12.5 L3 15 L5.5 12.5" stroke="#8fb2dd" stroke-width="1.3" fill="none"/><path d="M8 14 V1.5 L11 4" stroke="#8fb2dd" stroke-width="1.3" fill="none"/><path d="M10 8 H15 M10 10.5 H15 M10 13 H15" stroke="#a9c3e4" stroke-width="1.2"/></svg>
<div class="t d" style="left:837px;top:648px;font-size:12px;line-height:18px;color:#1a1a1a">nodename</div>
<svg class="abs" style="left:819px;top:649px" width="14" height="14" viewBox="0 0 14 14"><rect x="0.5" y="0.5" width="13" height="13" fill="#fff" stroke="#3b6cb0"/><path d="M3.5 4.5 V3.5 H10.5 V4.5 M7 3.5 V10.5 M5.2 10.5 H8.8" stroke="#1a1a1a" stroke-width="1.1" fill="none"/></svg>
<svg class="abs" style="left:906px;top:648px" width="16" height="17" viewBox="0 0 16 17"><path d="M3 2 V15 M0.5 12.5 L3 15 L5.5 12.5" stroke="#8fb2dd" stroke-width="1.3" fill="none"/><path d="M8 14 V1.5 L11 4" stroke="#8fb2dd" stroke-width="1.3" fill="none"/><path d="M10 8 H15 M10 10.5 H15 M10 13 H15" stroke="#a9c3e4" stroke-width="1.2"/></svg>
<div class="t d" style="left:952px;top:648px;font-size:12px;line-height:18px;color:#1a1a1a">nodeaddr</div>
<svg class="abs" style="left:933px;top:648px" width="16" height="15" viewBox="0 0 16 15"><path d="M2 4 V2 H14 V4 M2 2 V4" stroke="#5a5a5a" fill="none"/><text x="2" y="13.5" font-size="8.5" font-family="Liberation Sans" fill="#2b5d9c">1.1</text></svg>
<svg class="abs" style="left:1017px;top:648px" width="16" height="17" viewBox="0 0 16 17"><path d="M3 2 V15 M0.5 12.5 L3 15 L5.5 12.5" stroke="#8fb2dd" stroke-width="1.3" fill="none"/><path d="M8 14 V1.5 L11 4" stroke="#8fb2dd" stroke-width="1.3" fill="none"/><path d="M10 8 H15 M10 10.5 H15 M10 13 H15" stroke="#a9c3e4" stroke-width="1.2"/></svg>
<div class="t d" style="left:1063px;top:648px;font-size:12px;line-height:18px;color:#1a1a1a">nodetype</div>
<svg class="abs" style="left:1045px;top:649px" width="14" height="14" viewBox="0 0 14 14"><rect x="0.5" y="0.5" width="13" height="13" fill="#fff" stroke="#3b6cb0"/><path d="M3.5 4.5 V3.5 H10.5 V4.5 M7 3.5 V10.5 M5.2 10.5 H8.8" stroke="#1a1a1a" stroke-width="1.1" fill="none"/></svg>
<svg class="abs" style="left:1125px;top:648px" width="16" height="17" viewBox="0 0 16 17"><path d="M3 2 V15 M0.5 12.5 L3 15 L5.5 12.5" stroke="#8fb2dd" stroke-width="1.3" fill="none"/><path d="M8 14 V1.5 L11 4" stroke="#8fb2dd" stroke-width="1.3" fill="none"/><path d="M10 8 H15 M10 10.5 H15 M10 13 H15" stroke="#a9c3e4" stroke-width="1.2"/></svg>
<div class="t d" style="left:1171px;top:648px;font-size:12px;line-height:18px;color:#1a1a1a">nodeclass</div>
<svg class="abs" style="left:1153px;top:649px" width="14" height="14" viewBox="0 0 14 14"><rect x="0.5" y="0.5" width="13" height="13" fill="#fff" stroke="#3b6cb0"/><path d="M3.5 4.5 V3.5 H10.5 V4.5 M7 3.5 V10.5 M5.2 10.5 H8.8" stroke="#1a1a1a" stroke-width="1.1" fill="none"/></svg>
<svg class="abs" style="left:1235px;top:648px" width="16" height="17" viewBox="0 0 16 17"><path d="M3 2 V15 M0.5 12.5 L3 15 L5.5 12.5" stroke="#8fb2dd" stroke-width="1.3" fill="none"/><path d="M8 14 V1.5 L11 4" stroke="#8fb2dd" stroke-width="1.3" fill="none"/><path d="M10 8 H15 M10 10.5 H15 M10 13 H15" stroke="#a9c3e4" stroke-width="1.2"/></svg>
<div class="abs" style="left:485px;top:667px;width:763px;height:21px;background:#dce6f2"></div>
<div class="abs" style="left:456px;top:667px;width:29px;height:21px;background:#f0f0f0;border-bottom:1px solid #bdbdbd;border-right:1px solid #a0a0a0"></div>
<div class="t d" style="left:459px;top:670px;font-size:12px;line-height:18px;color:#1a1a1a">1</div>
<div class="t d" style="left:490px;top:669px;font-size:12px;line-height:18px;color:#1a1a1a">1</div>
<div class="t d" style="left:583px;top:669px;font-size:12px;line-height:18px;color:#1a1a1a">AT-40001</div>
<div class="t d" style="left:694px;top:669px;font-size:12px;line-height:18px;color:#1a1a1a">1#调度室控制器</div>
<div class="t d" style="left:816px;top:669px;font-size:12px;line-height:18px;color:#1a1a1a">探测器-1</div>
<div class="t d" style="left:931px;top:669px;font-size:12px;line-height:18px;color:#1a1a1a">1</div>
<div class="t d" style="left:1042px;top:669px;font-size:12px;line-height:18px;color:#1a1a1a">FT-2104</div>
<div class="t d" style="left:1150px;top:669px;font-size:12px;line-height:18px;color:#1a1a1a">GAS</div>
<div class="abs" style="left:485px;top:688px;width:763px;height:21px;background:#ffffff"></div>
<div class="abs" style="left:456px;top:688px;width:29px;height:21px;background:#f0f0f0;border-bottom:1px solid #bdbdbd;border-right:1px solid #a0a0a0"></div>
<div class="t d" style="left:459px;top:691px;font-size:12px;line-height:18px;color:#1a1a1a">2</div>
<div class="t d" style="left:490px;top:690px;font-size:12px;line-height:18px;color:#1a1a1a">2</div>
<div class="t d" style="left:583px;top:690px;font-size:12px;line-height:18px;color:#1a1a1a">AT-40002</div>
<div class="t d" style="left:694px;top:690px;font-size:12px;line-height:18px;color:#1a1a1a">1#调度室控制器</div>
<div class="t d" style="left:816px;top:690px;font-size:12px;line-height:18px;color:#1a1a1a">探测器-2</div>
<div class="t d" style="left:931px;top:690px;font-size:12px;line-height:18px;color:#1a1a1a">2</div>
<div class="t d" style="left:1042px;top:690px;font-size:12px;line-height:18px;color:#1a1a1a">FT-2104</div>
<div class="t d" style="left:1150px;top:690px;font-size:12px;line-height:18px;color:#1a1a1a">O2</div>
<div class="abs" style="left:485px;top:709px;width:763px;height:21px;background:#dce6f2"></div>
<div class="abs" style="left:456px;top:709px;width:29px;height:21px;background:#f0f0f0;border-bottom:1px solid #bdbdbd;border-right:1px solid #a0a0a0"></div>
<div class="t d" style="left:459px;top:712px;font-size:12px;line-height:18px;color:#1a1a1a">3</div>
<div class="t d" style="left:490px;top:711px;font-size:12px;line-height:18px;color:#1a1a1a">3</div>
<div class="t d" style="left:583px;top:711px;font-size:12px;line-height:18px;color:#1a1a1a">AT-40003</div>
<div class="t d" style="left:694px;top:711px;font-size:12px;line-height:18px;color:#1a1a1a">1#调度室控制器</div>
<div class="t d" style="left:816px;top:711px;font-size:12px;line-height:18px;color:#1a1a1a">探测器-3</div>
<div class="t d" style="left:931px;top:711px;font-size:12px;line-height:18px;color:#1a1a1a">3</div>
<div class="t d" style="left:1042px;top:711px;font-size:12px;line-height:18px;color:#1a1a1a">FT-2104</div>
<div class="t d" style="left:1150px;top:711px;font-size:12px;line-height:18px;color:#1a1a1a">CO</div>
<div class="abs" style="left:485px;top:730px;width:763px;height:21px;background:#ffffff"></div>
<div class="abs" style="left:456px;top:730px;width:29px;height:21px;background:#f0f0f0;border-bottom:1px solid #bdbdbd;border-right:1px solid #a0a0a0"></div>
<div class="t d" style="left:459px;top:733px;font-size:12px;line-height:18px;color:#1a1a1a">4</div>
<div class="t d" style="left:490px;top:732px;font-size:12px;line-height:18px;color:#1a1a1a">4</div>
<div class="t d" style="left:583px;top:732px;font-size:12px;line-height:18px;color:#1a1a1a">AT-40004</div>
<div class="t d" style="left:694px;top:732px;font-size:12px;line-height:18px;color:#1a1a1a">1#调度室控制器</div>
<div class="t d" style="left:816px;top:732px;font-size:12px;line-height:18px;color:#1a1a1a">探测器-4</div>
<div class="t d" style="left:931px;top:732px;font-size:12px;line-height:18px;color:#1a1a1a">4</div>
<div class="t d" style="left:1042px;top:732px;font-size:12px;line-height:18px;color:#1a1a1a">FT-2104</div>
<div class="t d" style="left:1150px;top:732px;font-size:12px;line-height:18px;color:#1a1a1a">NH3</div>
<div class="abs" style="left:485px;top:751px;width:763px;height:21px;background:#dce6f2"></div>
<div class="abs" style="left:456px;top:751px;width:29px;height:21px;background:#f0f0f0;border-bottom:1px solid #bdbdbd;border-right:1px solid #a0a0a0"></div>
<div class="t d" style="left:459px;top:754px;font-size:12px;line-height:18px;color:#1a1a1a">5</div>
<div class="t d" style="left:490px;top:753px;font-size:12px;line-height:18px;color:#1a1a1a">5</div>
<div class="t d" style="left:583px;top:753px;font-size:12px;line-height:18px;color:#1a1a1a">AT-40005</div>
<div class="t d" style="left:694px;top:753px;font-size:12px;line-height:18px;color:#1a1a1a">1#调度室控制器</div>
<div class="t d" style="left:816px;top:753px;font-size:12px;line-height:18px;color:#1a1a1a">探测器-5</div>
<div class="t d" style="left:931px;top:753px;font-size:12px;line-height:18px;color:#1a1a1a">5</div>
<div class="t d" style="left:1042px;top:753px;font-size:12px;line-height:18px;color:#1a1a1a">FT-2104</div>
<div class="t d" style="left:1150px;top:753px;font-size:12px;line-height:18px;color:#1a1a1a">GAS</div>
<div class="abs" style="left:485px;top:772px;width:763px;height:21px;background:#ffffff"></div>
<div class="abs" style="left:456px;top:772px;width:29px;height:21px;background:#f0f0f0;border-bottom:1px solid #bdbdbd;border-right:1px solid #a0a0a0"></div>
<div class="t d" style="left:459px;top:775px;font-size:12px;line-height:18px;color:#1a1a1a">6</div>
<div class="t d" style="left:490px;top:774px;font-size:12px;line-height:18px;color:#1a1a1a">6</div>
<div class="t d" style="left:583px;top:774px;font-size:12px;line-height:18px;color:#1a1a1a">AT-40006</div>
<div class="t d" style="left:694px;top:774px;font-size:12px;line-height:18px;color:#1a1a1a">1#调度室控制器</div>
<div class="t d" style="left:816px;top:774px;font-size:12px;line-height:18px;color:#1a1a1a">探测器-6</div>
<div class="t d" style="left:931px;top:774px;font-size:12px;line-height:18px;color:#1a1a1a">6</div>
<div class="t d" style="left:1042px;top:774px;font-size:12px;line-height:18px;color:#1a1a1a">FT-2104</div>
<div class="t d" style="left:1150px;top:774px;font-size:12px;line-height:18px;color:#1a1a1a">GAS</div>
<div class="abs" style="left:485px;top:793px;width:763px;height:21px;background:#dce6f2"></div>
<div class="abs" style="left:456px;top:793px;width:29px;height:21px;background:#f0f0f0;border-bottom:1px solid #bdbdbd;border-right:1px solid #a0a0a0"></div>
<div class="t d" style="left:459px;top:796px;font-size:12px;line-height:18px;color:#1a1a1a">7</div>
<div class="t d" style="left:490px;top:795px;font-size:12px;line-height:18px;color:#1a1a1a">7</div>
<div class="t d" style="left:583px;top:795px;font-size:12px;line-height:18px;color:#1a1a1a">AT-40007</div>
<div class="t d" style="left:694px;top:795px;font-size:12px;line-height:18px;color:#1a1a1a">1#调度室控制器</div>
<div class="t d" style="left:816px;top:795px;font-size:12px;line-height:18px;color:#1a1a1a">探测器-7</div>
<div class="t d" style="left:931px;top:795px;font-size:12px;line-height:18px;color:#1a1a1a">7</div>
<div class="t d" style="left:1042px;top:795px;font-size:12px;line-height:18px;color:#1a1a1a">FT-2104</div>
<div class="t d" style="left:1150px;top:795px;font-size:12px;line-height:18px;color:#1a1a1a">GAS</div>
<div class="abs" style="left:485px;top:814px;width:763px;height:21px;background:#ffffff"></div>
<div class="abs" style="left:456px;top:814px;width:29px;height:21px;background:#f0f0f0;border-bottom:1px solid #bdbdbd;border-right:1px solid #a0a0a0"></div>
<div class="t d" style="left:459px;top:817px;font-size:12px;line-height:18px;color:#1a1a1a">8</div>
<div class="t d" style="left:490px;top:816px;font-size:12px;line-height:18px;color:#1a1a1a">8</div>
<div class="t d" style="left:583px;top:816px;font-size:12px;line-height:18px;color:#1a1a1a">AT-40008</div>
<div class="t d" style="left:694px;top:816px;font-size:12px;line-height:18px;color:#1a1a1a">1#调度室控制器</div>
<div class="t d" style="left:816px;top:816px;font-size:12px;line-height:18px;color:#1a1a1a">探测器-8</div>
<div class="t d" style="left:931px;top:816px;font-size:12px;line-height:18px;color:#1a1a1a">8</div>
<div class="t d" style="left:1042px;top:816px;font-size:12px;line-height:18px;color:#1a1a1a">FT-2104</div>
<div class="t d" style="left:1150px;top:816px;font-size:12px;line-height:18px;color:#1a1a1a">GAS</div>
<div class="abs" style="left:485px;top:835px;width:763px;height:21px;background:#dce6f2"></div>
<div class="abs" style="left:456px;top:835px;width:29px;height:21px;background:#f0f0f0;border-bottom:1px solid #bdbdbd;border-right:1px solid #a0a0a0"></div>
<div class="t d" style="left:459px;top:838px;font-size:12px;line-height:18px;color:#1a1a1a">9</div>
<div class="t d" style="left:490px;top:837px;font-size:12px;line-height:18px;color:#1a1a1a">9</div>
<div class="t d" style="left:583px;top:837px;font-size:12px;line-height:18px;color:#1a1a1a">AT-40009</div>
<div class="t d" style="left:694px;top:837px;font-size:12px;line-height:18px;color:#1a1a1a">2#调度室控制器</div>
<div class="t d" style="left:816px;top:837px;font-size:12px;line-height:18px;color:#1a1a1a">探测器-9</div>
<div class="t d" style="left:931px;top:837px;font-size:12px;line-height:18px;color:#1a1a1a">1</div>
<div class="t d" style="left:1042px;top:837px;font-size:12px;line-height:18px;color:#1a1a1a">FE-2102</div>
<div class="t d" style="left:1150px;top:837px;font-size:12px;line-height:18px;color:#1a1a1a">GAS</div>
<div class="abs" style="left:485px;top:856px;width:763px;height:21px;background:#ffffff"></div>
<div class="abs" style="left:456px;top:856px;width:29px;height:21px;background:#f0f0f0;border-bottom:1px solid #bdbdbd;border-right:1px solid #a0a0a0"></div>
<div class="t d" style="left:459px;top:859px;font-size:12px;line-height:18px;color:#1a1a1a">10</div>
<div class="t d" style="left:490px;top:858px;font-size:12px;line-height:18px;color:#1a1a1a">10</div>
<div class="t d" style="left:583px;top:858px;font-size:12px;line-height:18px;color:#1a1a1a">AT-40010</div>
<div class="t d" style="left:694px;top:858px;font-size:12px;line-height:18px;color:#1a1a1a">2#调度室控制器</div>
<div class="t d" style="left:816px;top:858px;font-size:12px;line-height:18px;color:#1a1a1a">探测器-10</div>
<div class="t d" style="left:931px;top:858px;font-size:12px;line-height:18px;color:#1a1a1a">2</div>
<div class="t d" style="left:1042px;top:858px;font-size:12px;line-height:18px;color:#1a1a1a">FE-2102</div>
<div class="t d" style="left:1150px;top:858px;font-size:12px;line-height:18px;color:#1a1a1a">GAS</div>
<div class="abs" style="left:485px;top:877px;width:763px;height:21px;background:#dce6f2"></div>
<div class="abs" style="left:456px;top:877px;width:29px;height:21px;background:#f0f0f0;border-bottom:1px solid #bdbdbd;border-right:1px solid #a0a0a0"></div>
<div class="t d" style="left:459px;top:880px;font-size:12px;line-height:18px;color:#1a1a1a">11</div>
<div class="t d" style="left:490px;top:879px;font-size:12px;line-height:18px;color:#1a1a1a">11</div>
<div class="t d" style="left:583px;top:879px;font-size:12px;line-height:18px;color:#1a1a1a">AT-40011</div>
<div class="t d" style="left:694px;top:879px;font-size:12px;line-height:18px;color:#1a1a1a">3#调度室控制器</div>
<div class="t d" style="left:816px;top:879px;font-size:12px;line-height:18px;color:#1a1a1a">探测器-11</div>
<div class="t d" style="left:931px;top:879px;font-size:12px;line-height:18px;color:#1a1a1a">1</div>
<div class="t d" style="left:1042px;top:879px;font-size:12px;line-height:18px;color:#1a1a1a">FE-2102</div>
<div class="t d" style="left:1150px;top:879px;font-size:12px;line-height:18px;color:#1a1a1a">GAS</div>
<svg class="abs" style="left:0;top:0" width="1381" height="884"><rect x="485" y="646" width="1" height="21" fill="#9a9a9a"/><rect x="578" y="646" width="1" height="21" fill="#9a9a9a"/><rect x="689" y="646" width="1" height="21" fill="#9a9a9a"/><rect x="811" y="646" width="1" height="21" fill="#9a9a9a"/><rect x="926" y="646" width="1" height="21" fill="#9a9a9a"/><rect x="1037" y="646" width="1" height="21" fill="#9a9a9a"/><rect x="1145" y="646" width="1" height="21" fill="#9a9a9a"/><rect x="578" y="667" width="1" height="217" fill="#e6ebf1"/><rect x="689" y="667" width="1" height="217" fill="#e6ebf1"/><rect x="811" y="667" width="1" height="217" fill="#e6ebf1"/><rect x="926" y="667" width="1" height="217" fill="#e6ebf1"/><rect x="1037" y="667" width="1" height="217" fill="#e6ebf1"/><rect x="1145" y="667" width="1" height="217" fill="#e6ebf1"/></svg>
<div class="abs" style="left:1248px;top:592px;width:4px;height:292px;background:#f0f0f0;border-left:2px solid #a9bcd4"></div>
<svg class="abs" style="left:0;top:0" width="1381" height="884">
<path d="M308 651.6 L324.3 650.2 L321.5 653 L446 712.5 L445 714 L318.5 660.5 L318 664.3 Z" fill="#ee2a1e"/>
</svg>
<div class="abs" style="left:0;top:845px;width:1381px;height:39px;background:rgba(0,0,0,0.585)"></div>
<div class="abs" style="left:0;top:845px;width:47px;height:39px;background:rgba(255,255,255,0.14)"></div>
<svg class="abs" style="left:11px;top:852px" width="25" height="25" viewBox="0 0 25 25">
<rect x="0" y="0.5" width="24.5" height="23.5" rx="3" fill="#f7f8fb"/>
<path fill="#4f8fe6" fill-rule="evenodd" d="M10.5 3 H14 L14.5 5.2 L16.6 6.1 L18.5 4.8 L21 7.3 L19.7 9.2 L20.5 11.3 L22.5 11.8 V15.2 L20.5 15.7 L19.7 17.8 L21 19.7 L18.5 22.2 L16.6 20.9 L14.5 21.8 L14 24 H10.5 L10 21.8 L7.9 20.9 L6 22.2 L3.5 19.7 L4.8 17.8 L4 15.7 L2 15.2 V11.8 L4 11.3 L4.8 9.2 L3.5 7.3 L6 4.8 L7.9 6.1 L10 5.2 Z M12.25 8.5 A5 5 0 1 0 12.25 18.5 A5 5 0 1 0 12.25 8.5 Z"/>
<path d="M9 10 L17 18.5" stroke="#f2b52a" stroke-width="4" stroke-linecap="round"/>
<circle cx="10" cy="11" r="3.2" fill="#f5c542"/>
</svg>
<svg class="abs" style="left:60px;top:852px" width="24" height="24" viewBox="0 0 24 24">
<rect x="0.5" y="0.5" width="23" height="23" rx="8" fill="#38b05c"/>
<path d="M12 4 L18.5 6.5 V11 Q18.5 16.5 12 20.5 Q5.5 16.5 5.5 11 V6.5 Z" fill="#f2fbf4"/>
<path d="M12 4 L18.5 6.5 V11 Q18.5 16.5 12 20.5 Z" fill="#cfeedd"/>
</svg>
<svg class="abs" style="left:109px;top:852px" width="22" height="24" viewBox="0 0 22 24">
<rect x="0.5" y="0.5" width="21" height="23" rx="7" fill="#4b4b4b"/>
<path d="M5.5 7 V14.5 Q5.5 17 8 17 H14 Q16.5 17 16.5 14.5 V7 M11 9.5 V17" stroke="#ececec" stroke-width="1.8" fill="none"/>
</svg>
<div class="abs" style="left:0;top:882px;width:140px;height:2px;background:rgba(150,190,235,0.55)"></div>
<svg class="abs" style="left:1290px;top:852px" width="91" height="24" viewBox="0 0 91 24">
<path d="M5 16 L10 11 L15 16" stroke="#fff" stroke-width="1.3" fill="none"/>
<rect x="28" y="9" width="15" height="10" fill="none" stroke="#fff" stroke-width="1.2"/>
<path d="M33 22 H39 M36 19 V22" stroke="#fff" stroke-width="1.2"/>
<rect x="26" y="7" width="4" height="4" fill="none" stroke="#fff" stroke-width="1"/>
<path d="M52 11 H55 L59 7.5 V20.5 L55 17 H52 Z" fill="none" stroke="#fff" stroke-width="1.1"/>
<path d="M62 11 Q64 14 62 17 M65 9 Q68 14 65 19 M68 7 Q72 14 68 21" stroke="#fff" stroke-width="1.1" fill="none"/>
</svg>
<div class="t d" style="left:1366px;top:856px;font-size:14px;line-height:16px;color:#fff">中</div>
<div class="abs" style="left:914px;top:877px;width:30px;height:7px;background:#f06a2a;transform:skewX(-10deg)"></div>
<div class="abs" style="left:943px;top:880px;width:117px;height:4px;background:#fff"></div></body></html>
